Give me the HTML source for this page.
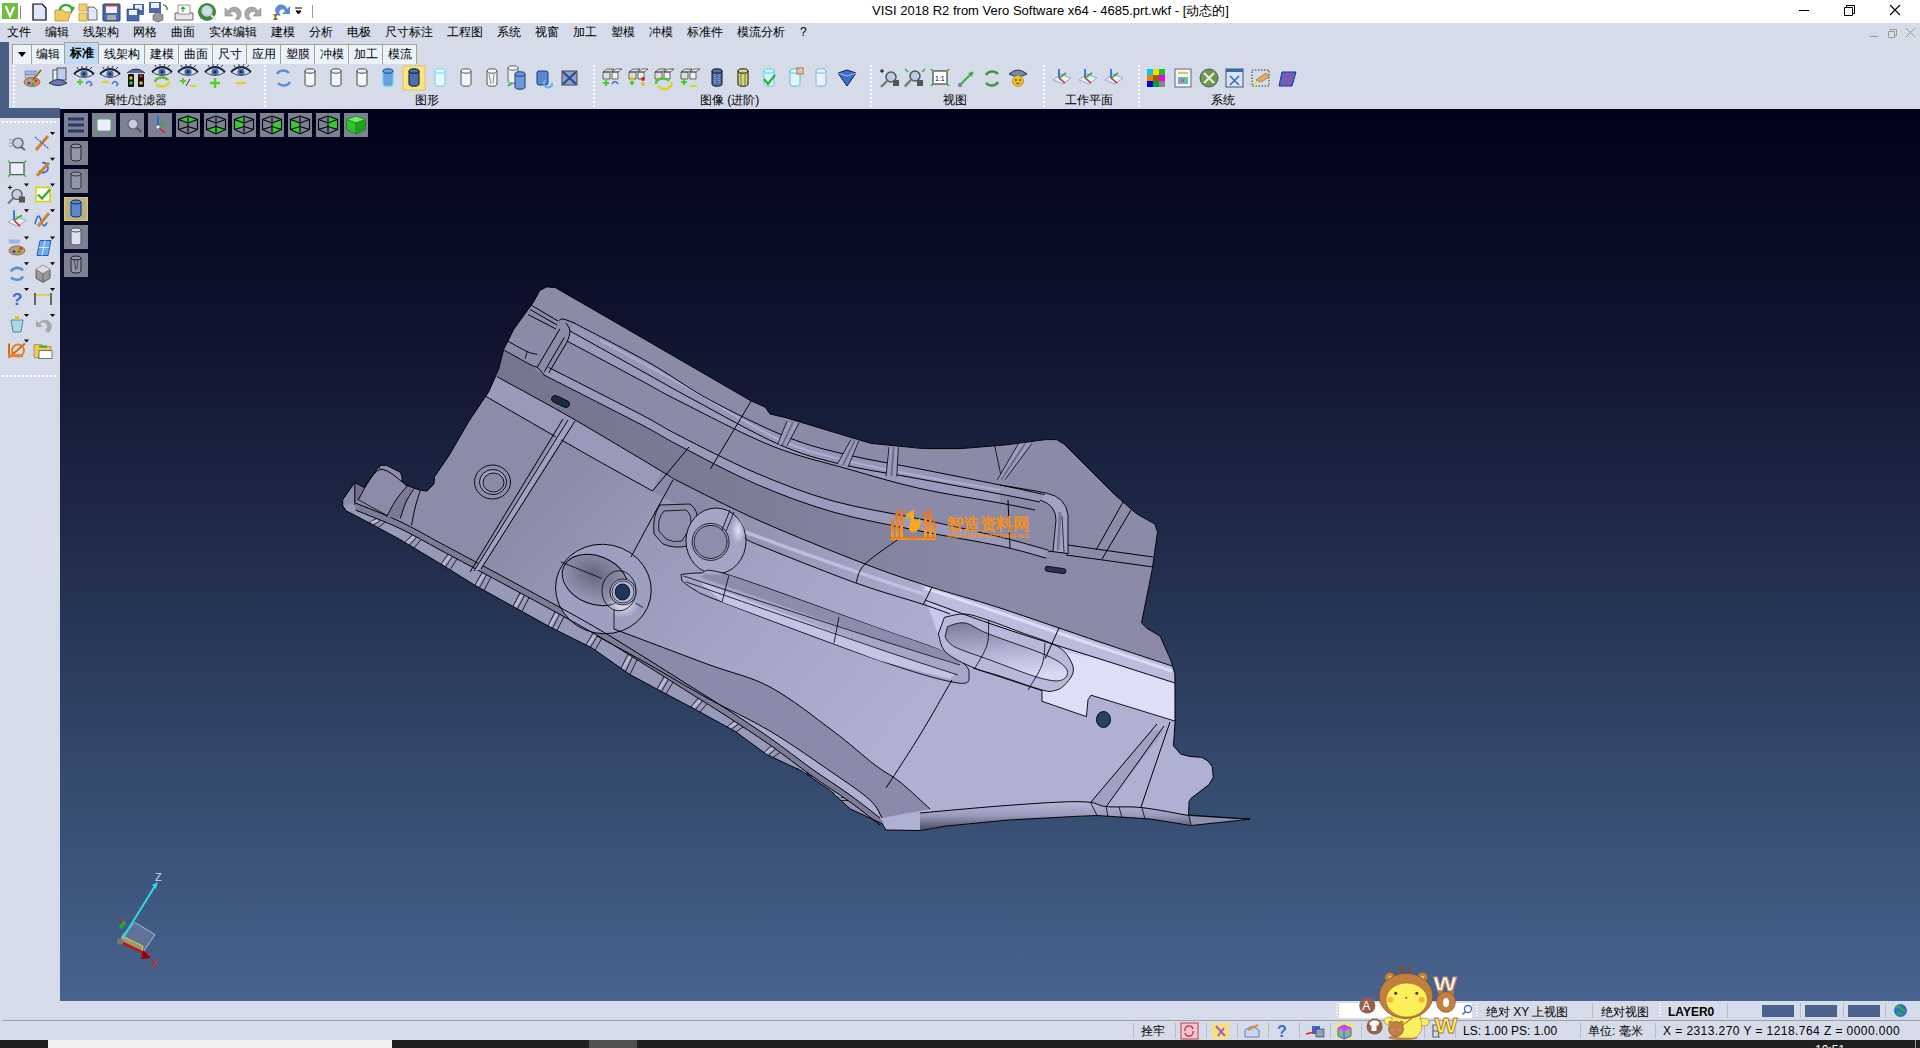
<!DOCTYPE html><html><head><meta charset="utf-8"><style>
*{margin:0;padding:0;box-sizing:border-box}
html,body{width:1920px;height:1048px;overflow:hidden;background:#d6dbe9;font-family:"Liberation Sans",sans-serif;font-size:12px;color:#000;position:relative}
.abs{position:absolute}
svg{display:block}
#title{left:0;top:0;width:1920px;height:23px;background:#fff}
#menu{left:0;top:23px;width:1920px;height:19px;background:#d6dbe9}
#menu span{position:absolute;top:3px;font-size:12px;line-height:13px;white-space:nowrap}
#tbar{left:9px;top:42px;width:1911px;height:67px;background:#d6dbe9}
#lstrip{left:0;top:42px;width:9px;height:76px;background:#4b5e84}
#lstrip2{left:0;top:108px;width:60px;height:10px;background:#4b5e84}
.tab{position:absolute;top:44px;height:20px;background:#eaf2fb;border:1px solid #a8a288;border-bottom:none;font-size:12px;line-height:18px;text-align:center;white-space:nowrap}
.tab.act{top:42px;height:22px;background:#bfdbf5;font-weight:bold;line-height:21px}
.tab svg{display:inline-block;vertical-align:top}
#view{left:60px;top:109px;width:1860px;height:892px;background:linear-gradient(#01021a 0%,#0f132d 25%,#212d4c 50%,#344a6e 75%,#48638e 100%)}
#left{left:0;top:118px;width:60px;height:883px;background:#d6dbe9}
#status{left:0;top:1001px;width:1920px;height:39px;background:#d6dbe9}
#task{left:0;top:1040px;width:1920px;height:8px;background:#1f1f1f;overflow:hidden}
.lbl{position:absolute;top:94px;font-size:12px;line-height:13px;white-space:nowrap}
#status span, body > span{font-size:12px;line-height:13px}
</style></head><body><div id="title" class="abs"><span class="abs" style="left:872px;top:4px;font-size:13px;line-height:14px;white-space:nowrap;color:#000">VISI 2018 R2 from Vero Software x64 - 4685.prt.wkf - [动态的]</span><svg class="abs" style="left:0;top:0" width="320" height="23"><rect x="2" y="3" width="16" height="16" fill="#6cbf3a"/><path d="M6 7l4 9l4-9" fill="none" stroke="#fff" stroke-width="2.2"/><circle cx="6" cy="7" r="1.3" fill="#fff"/><path d="M20.5 6v13" stroke="#888"/><path d="M33 4h9l4 4v12h-13z" fill="#dfe8fa" stroke="#000" stroke-width="1.2"/><path d="M55 10h8l2 2h6l-3 9h-13z" fill="#f0c860" stroke="#b08a30" stroke-width=".8"/><path d="M60 10a6 5 0 0 1 12 0l2-3" fill="none" stroke="#30b030" stroke-width="2.4"/><path d="M79 4h8v7h-8zM79 13h8v8h-8z" fill="#f0d070" stroke="#b8983a" stroke-width=".8"/><path d="M88 7h6l3 3v10h-9z" fill="#dfe8fa" stroke="#444" stroke-width=".8"/><rect x="103" y="4" width="17" height="17" rx="1" fill="#4a6ab0" stroke="#2a3a70"/><rect x="106" y="5" width="11" height="8" fill="#f4f4f4"/><rect x="106" y="5" width="11" height="1.5" fill="#e04030"/><rect x="107" y="15" width="9" height="5" fill="#aaa"/><rect x="133" y="4" width="11" height="11" fill="#4a6ab0"/><rect x="135" y="5" width="7" height="5" fill="#eee"/><rect x="127" y="9" width="12" height="12" fill="#4a6ab0" stroke="#2a3a70" stroke-width=".6"/><rect x="129" y="10" width="8" height="5" fill="#eee"/><rect x="149" y="2" width="12" height="11" fill="#4a6ab0"/><rect x="151" y="3" width="8" height="5" fill="#eee"/><path d="M158 12l5 3v5l-5 2l-5-2v-5z" fill="#999" stroke="#555" stroke-width=".6"/><path d="M163 5a4 4 0 0 1 4 5" fill="none" stroke="#30a030" stroke-width="1.6"/><path d="M175 13h18v7h-18z" fill="#e8e8e8" stroke="#666"/><path d="M178 5h12v9h-12z" fill="#fff" stroke="#777" stroke-width=".8"/><path d="M183 7v5M181 9l2-2l2 2" stroke="#20b020" stroke-width="1.2" fill="none"/><circle cx="207" cy="12" r="9" fill="#3a8a3a"/><circle cx="207" cy="11" r="5" fill="#c8e0f0" stroke="#ccc" stroke-width="1.5"/><path d="M211 15l5 5" stroke="#ddd" stroke-width="2.4"/><path d="M238 20a7 7 0 1 0-10-9l-3-3v8h8l-3-3a4 4 0 1 1 5 6z" fill="#a8a8a8" stroke="#888" stroke-width=".6"/><path d="M248 20a7 7 0 1 1 10-9l3-3v8h-8l3-3a4 4 0 1 0-5 6z" fill="#a8a8a8" stroke="#888" stroke-width=".6"/><path d="M279 16a6 6 0 1 1 8-7l3-3v8h-8l3-3a3 3 0 1 0-4 4z" fill="#5a8ad8"/><path d="M273 14h5l-2 3l2 3h-5l2-3z" fill="#8a6a20"/><path d="M295 8h7M296 11h5l-2.5 3z" stroke="#000" fill="#000" stroke-width="1"/><path d="M312.5 5v13" stroke="#999"/></svg><svg class="abs" style="left:1790px;top:0" width="130" height="23"><path d="M9 10.5h10" stroke="#000" stroke-width="1"/><path d="M54.5 7.5h8v8h-8z M56.5 7.5v-2h8v8h-2" fill="none" stroke="#000" stroke-width="1"/><path d="M100 5l10 10M110 5l-10 10" stroke="#000" stroke-width="1.1"/></svg></div><div id="menu" class="abs"><span style="left:7px">文件</span><span style="left:45px">编辑</span><span style="left:83px">线架构</span><span style="left:133px">网格</span><span style="left:171px">曲面</span><span style="left:209px">实体编辑</span><span style="left:271px">建模</span><span style="left:309px">分析</span><span style="left:347px">电极</span><span style="left:385px">尺寸标注</span><span style="left:447px">工程图</span><span style="left:497px">系统</span><span style="left:535px">视窗</span><span style="left:573px">加工</span><span style="left:611px">塑模</span><span style="left:649px">冲模</span><span style="left:687px">标准件</span><span style="left:737px">模流分析</span><span style="left:800px">?</span><svg class="abs" style="left:1866px;top:0" width="54" height="19" viewBox="0 0 54 19"><path d="M4 13.5h8" stroke="#a09a88" stroke-width="1"/><path d="M22.5 8.5h6v6h-6z M24.5 8.5v-2h6v6h-2" fill="none" stroke="#a09a88"/><path d="M40 5l9 9M49 5l-9 9" stroke="#a09a88"/></svg></div><div id="tbar" class="abs"></div><div id="lstrip" class="abs"></div><div id="lstrip2" class="abs"></div><div class="tab" style="left:12px;width:20px"><svg width="12" height="18" style="margin-top:0"><path d="M2 7h8l-4 5z" fill="#000"/></svg></div><div class="tab" style="left:31px;width:34px">编辑</div><div class="tab act" style="left:64px;width:35px">标准</div><div class="tab" style="left:98px;width:47px">线架构</div><div class="tab" style="left:144px;width:35px">建模</div><div class="tab" style="left:178px;width:35px">曲面</div><div class="tab" style="left:212px;width:35px">尺寸</div><div class="tab" style="left:246px;width:35px">应用</div><div class="tab" style="left:280px;width:35px">塑膜</div><div class="tab" style="left:314px;width:35px">冲模</div><div class="tab" style="left:348px;width:35px">加工</div><div class="tab" style="left:382px;width:35px">模流</div><div class="abs" style="left:13px;top:65px;width:2px;height:42px;background-image:linear-gradient(#fff 50%,transparent 50%);background-size:2px 4px;opacity:.9"></div><div class="abs" style="left:264px;top:65px;width:2px;height:42px;background-image:linear-gradient(#fff 50%,transparent 50%);background-size:2px 4px;opacity:.9"></div><div class="abs" style="left:593px;top:65px;width:2px;height:42px;background-image:linear-gradient(#fff 50%,transparent 50%);background-size:2px 4px;opacity:.9"></div><div class="abs" style="left:870px;top:65px;width:2px;height:42px;background-image:linear-gradient(#fff 50%,transparent 50%);background-size:2px 4px;opacity:.9"></div><div class="abs" style="left:1043px;top:65px;width:2px;height:42px;background-image:linear-gradient(#fff 50%,transparent 50%);background-size:2px 4px;opacity:.9"></div><div class="abs" style="left:1138px;top:65px;width:2px;height:42px;background-image:linear-gradient(#fff 50%,transparent 50%);background-size:2px 4px;opacity:.9"></div><span class="lbl" style="left:104px">属性/过滤器</span><span class="lbl" style="left:415px">图形</span><span class="lbl" style="left:700px">图像 (进阶)</span><span class="lbl" style="left:943px">视图</span><span class="lbl" style="left:1065px">工作平面</span><span class="lbl" style="left:1211px">系统</span><svg class="abs" style="left:0;top:0" width="1320" height="110"><g><path d="M25 71h12l-2 4h-10z" fill="#9db4e8" stroke="#6a7aa8" stroke-width=".6"/><path d="M25 75h10v3h-10z" fill="#ccc" stroke="#888" stroke-width=".6"/><ellipse cx="32" cy="82" rx="8" ry="4.5" fill="#c89a6a" stroke="#7a5a3a" stroke-width=".8"/><circle cx="29" cy="83" r="1.6" fill="#2a4af0"/><circle cx="33" cy="84" r="1.6" fill="#2ab02a"/><circle cx="36" cy="81" r="1.6" fill="#e03030"/><path d="M33 80l8-10" stroke="#8a5a2a" stroke-width="1.5"/><rect x="53" y="70" width="10" height="12" fill="#e8eefa" stroke="#333" stroke-width=".8"/><rect x="57" y="68" width="9" height="12" fill="#b8ccf0" stroke="#333" stroke-width=".8"/><path d="M49 83q9-7 18 0q-9 5-18 0z" fill="#6a7ab0" stroke="#2c3550"/><path d="M74 74q10 -9 20 0q-10 7 -20 0z" fill="#d8dcea" stroke="#3a4668" stroke-width="1"/><circle cx="84" cy="74" r="3.6" fill="#4a70a8"/><circle cx="84" cy="74" r="1.4" fill="#1a2a48"/><path d="M74 74q10 -10 20 0" fill="none" stroke="#1c2440" stroke-width="2"/><path d="M78 69l-1 -2M82 68l0 -2M86 68l1 -2M90 69l2 -2" stroke="#1c2440" stroke-width=".9"/><path d="M77 82h6M80 79v6" stroke="#58d020" stroke-width="2"/><path d="M86 84q3-5 6 0l-2 2" fill="none" stroke="#3a70d0" stroke-width="1.4"/><path d="M100 74q10 -9 20 0q-10 7 -20 0z" fill="#d8dcea" stroke="#3a4668" stroke-width="1"/><circle cx="110" cy="74" r="3.6" fill="#4a70a8"/><circle cx="110" cy="74" r="1.4" fill="#1a2a48"/><path d="M100 74q10 -10 20 0" fill="none" stroke="#1c2440" stroke-width="2"/><path d="M104 69l-1 -2M108 68l0 -2M112 68l1 -2M116 69l2 -2" stroke="#1c2440" stroke-width=".9"/><path d="M102 82h7" stroke="#e0d020" stroke-width="2.2"/><path d="M112 84q3-5 6 0l-2 2" fill="none" stroke="#3a70d0" stroke-width="1.4"/><path d="M127 73q9-8 18 0" fill="#5a6a9a" stroke="#2c3550"/><rect x="128" y="74" width="6" height="13" rx="1" fill="#111"/><rect x="138" y="74" width="6" height="13" rx="1" fill="#111"/><circle cx="131" cy="83" r="1.8" fill="#30d030"/><circle cx="131" cy="78" r="1.8" fill="#e0c020"/><circle cx="141" cy="76" r="1.8" fill="#e02020"/><circle cx="141" cy="83" r="1.8" fill="#e0c020"/><path d="M152 72q10 -9 20 0q-10 7 -20 0z" fill="#d8dcea" stroke="#3a4668" stroke-width="1"/><circle cx="162" cy="72" r="3.6" fill="#4a70a8"/><circle cx="162" cy="72" r="1.4" fill="#1a2a48"/><path d="M152 72q10 -10 20 0" fill="none" stroke="#1c2440" stroke-width="2"/><path d="M156 67l-1 -2M160 66l0 -2M164 66l1 -2M168 67l2 -2" stroke="#1c2440" stroke-width=".9"/><path d="M155 82a7 5 0 0 1 13-2" fill="none" stroke="#60c030" stroke-width="2.4"/><path d="M169 81a7 5 0 0 1-13 3" fill="none" stroke="#e0d020" stroke-width="2.4"/><path d="M178 72q10 -9 20 0q-10 7 -20 0z" fill="#d8dcea" stroke="#3a4668" stroke-width="1"/><circle cx="188" cy="72" r="3.6" fill="#4a70a8"/><circle cx="188" cy="72" r="1.4" fill="#1a2a48"/><path d="M178 72q10 -10 20 0" fill="none" stroke="#1c2440" stroke-width="2"/><path d="M182 67l-1 -2M186 66l0 -2M190 66l1 -2M194 67l2 -2" stroke="#1c2440" stroke-width=".9"/><path d="M180 81h6M183 78v6" stroke="#58d020" stroke-width="2"/><path d="M186 86l4-7" stroke="#333"/><path d="M190 86h6" stroke="#e0d020" stroke-width="2"/><path d="M205 72q10 -9 20 0q-10 7 -20 0z" fill="#d8dcea" stroke="#3a4668" stroke-width="1"/><circle cx="215" cy="72" r="3.6" fill="#4a70a8"/><circle cx="215" cy="72" r="1.4" fill="#1a2a48"/><path d="M205 72q10 -10 20 0" fill="none" stroke="#1c2440" stroke-width="2"/><path d="M209 67l-1 -2M213 66l0 -2M217 66l1 -2M221 67l2 -2" stroke="#1c2440" stroke-width=".9"/><path d="M210 83h10M215 78v10" stroke="#58d020" stroke-width="2.4"/><path d="M231 72q10 -9 20 0q-10 7 -20 0z" fill="#d8dcea" stroke="#3a4668" stroke-width="1"/><circle cx="241" cy="72" r="3.6" fill="#4a70a8"/><circle cx="241" cy="72" r="1.4" fill="#1a2a48"/><path d="M231 72q10 -10 20 0" fill="none" stroke="#1c2440" stroke-width="2"/><path d="M235 67l-1 -2M239 66l0 -2M243 66l1 -2M247 67l2 -2" stroke="#1c2440" stroke-width=".9"/><path d="M236 83h10" stroke="#e0d020" stroke-width="2.4"/></g><path d="M277 74a7 6 0 0 1 12-1M290 82a7 6 0 0 1-12 1" fill="none" stroke="#5a90d8" stroke-width="2.6"/><path d="M305 71v13a5 2.2 0 0 0 10 0v-13" fill="#f4f6fa" stroke="#444" stroke-width="1"/><ellipse cx="310" cy="71" rx="5" ry="2.2" fill="#f4f6fa" stroke="#444" stroke-width="1"/><path d="M331 71v13a5 2.2 0 0 0 10 0v-13" fill="#f4f6fa" stroke="#444" stroke-width="1"/><ellipse cx="336" cy="71" rx="5" ry="2.2" fill="#f4f6fa" stroke="#444" stroke-width="1"/><path d="M357 71v13a5 2.2 0 0 0 10 0v-13" fill="#f4f6fa" stroke="#444" stroke-width="1"/><ellipse cx="362" cy="71" rx="5" ry="2.2" fill="#f4f6fa" stroke="#444" stroke-width="1"/><path d="M383 71v13a5 2.2 0 0 0 10 0v-13" fill="#6aa0e0" stroke="#40e0f0" stroke-width="1"/><ellipse cx="388" cy="71" rx="5" ry="2.2" fill="#6aa0e0" stroke="#1a4a90" stroke-width="1"/><rect x="403" y="66" width="22" height="24" fill="#fbe38a" stroke="#e8c34a"/><path d="M409 71v13a5 2.2 0 0 0 10 0v-13" fill="#4a70b0" stroke="#111" stroke-width="1"/><ellipse cx="414" cy="71" rx="5" ry="2.2" fill="#4a70b0" stroke="#111" stroke-width="1"/><path d="M435 71v13a5 2.2 0 0 0 10 0v-13" fill="#e8f8ff" stroke="#60d8f0" stroke-width="1"/><ellipse cx="440" cy="71" rx="5" ry="2.2" fill="#e8f8ff" stroke="#60d8f0" stroke-width="1"/><path d="M461 71v13a5 2.2 0 0 0 10 0v-13" fill="#f4f6fa" stroke="#555" stroke-width="1"/><ellipse cx="466" cy="71" rx="5" ry="2.2" fill="#f4f6fa" stroke="#555" stroke-width="1"/><path d="M487 71v13a5 2.2 0 0 0 10 0v-13" fill="#f4f6fa" stroke="#555" stroke-width="1"/><ellipse cx="492" cy="71" rx="5" ry="2.2" fill="#f4f6fa" stroke="#555" stroke-width="1"/><path d="M489 74l2 10M494 74l-1 9" stroke="#555" stroke-width=".7"/><path d="M508 68v13a5 2.2 0 0 0 10 0v-13" fill="#eee" stroke="#666" stroke-width="1"/><ellipse cx="513" cy="68" rx="5" ry="2.2" fill="#eee" stroke="#666" stroke-width="1"/><path d="M515 74v13a5 2.2 0 0 0 10 0v-13" fill="#6a9ad8" stroke="#1a3a80" stroke-width="1"/><ellipse cx="520" cy="74" rx="5" ry="2.2" fill="#6a9ad8" stroke="#1a3a80" stroke-width="1"/><path d="M508 86l4-3" stroke="#30c030" stroke-width="2"/><rect x="537" y="71" width="11" height="14" rx="2" fill="#5a88d0" stroke="#1a3a80"/><path d="M546 80a4 4 0 1 0 6 3" fill="none" stroke="#6ab0f0" stroke-width="2"/><rect x="562" y="71" width="15" height="14" fill="#8ca0c8" stroke="#445"/><path d="M563 72l13 12M576 72l-13 12" stroke="#2a4a90" stroke-width="2"/><path d="M603 72l4-3h7l-4 3z M603 72h7v7h-7z" fill="#ddd" stroke="#333" stroke-width=".7"/><path d="M612 72l4-3h6l-4 3z M612 72h6v7h-6z" fill="#eee" stroke="#333" stroke-width=".7"/><path d="M603 83h6M606 80v6" stroke="#40d020" stroke-width="2"/><path d="M612 84q3-5 6 0" fill="none" stroke="#3a70d0" stroke-width="1.5"/><path d="M629 72l4-3h7l-4 3z M629 72h7v7h-7z" fill="#ddd" stroke="#333" stroke-width=".7"/><path d="M638 72l4-3h6l-4 3z M638 72h6v7h-6z" fill="#eee" stroke="#333" stroke-width=".7"/><circle cx="632" cy="83" r="2" fill="#30d030"/><circle cx="632" cy="79" r="2" fill="#e0c020"/><circle cx="643" cy="79" r="2" fill="#e02020"/><circle cx="643" cy="84" r="2" fill="#e0c020"/><path d="M655 72l4-3h7l-4 3z M655 72h7v7h-7z" fill="#ddd" stroke="#333" stroke-width=".7"/><path d="M664 72l4-3h6l-4 3z M664 72h6v7h-6z" fill="#eee" stroke="#333" stroke-width=".7"/><path d="M656 84a7 5 0 0 1 13-3" fill="none" stroke="#60c030" stroke-width="2.4"/><path d="M671 82a7 5 0 0 1-13 4" fill="none" stroke="#e0d020" stroke-width="2.4"/><path d="M681 72l4-3h7l-4 3z M681 72h7v7h-7z" fill="#ddd" stroke="#333" stroke-width=".7"/><path d="M690 72l4-3h6l-4 3z M690 72h6v7h-6z" fill="#eee" stroke="#333" stroke-width=".7"/><path d="M681 82h6M684 79v6" stroke="#40d020" stroke-width="2"/><path d="M690 86h7" stroke="#e0d020" stroke-width="2"/><path d="M712 71v13a5 2.2 0 0 0 10 0v-13" fill="#4a70b0" stroke="#111" stroke-width="1"/><ellipse cx="717" cy="71" rx="5" ry="2.2" fill="#4a70b0" stroke="#111" stroke-width="1"/><path d="M715 74v10M719 74v10" stroke="#fff" stroke-width=".6" stroke-dasharray="1 1"/><path d="M738 71v13a5 2.2 0 0 0 10 0v-13" fill="#d8d878" stroke="#111" stroke-width="1"/><ellipse cx="743" cy="71" rx="5" ry="2.2" fill="#d8d878" stroke="#111" stroke-width="1"/><path d="M741 73v12M745 73v12" stroke="#555" stroke-width=".8"/><path d="M764 71v13a5 2.2 0 0 0 10 0v-13" fill="#d8f4fa" stroke="#50d0e8" stroke-width="1"/><ellipse cx="769" cy="71" rx="5" ry="2.2" fill="#d8f4fa" stroke="#50d0e8" stroke-width="1"/><path d="M764 79l4 5l7-9" fill="none" stroke="#30b030" stroke-width="2.2"/><path d="M790 71v13a5 2.2 0 0 0 10 0v-13" fill="#e4f6fc" stroke="#50c0e0" stroke-width="1"/><ellipse cx="795" cy="71" rx="5" ry="2.2" fill="#e4f6fc" stroke="#50c0e0" stroke-width="1"/><rect x="797" y="68" width="6" height="6" fill="none" stroke="#e08030" stroke-width="1.4"/><path d="M816 71v13a5 2.2 0 0 0 10 0v-13" fill="#e8f2ff" stroke="#80b0e8" stroke-width="1"/><ellipse cx="821" cy="71" rx="5" ry="2.2" fill="#e8f2ff" stroke="#80b0e8" stroke-width="1"/><path d="M838 73l9-3l9 3l-9 13z" fill="#3a70d0" stroke="#102050"/><path d="M838 73l9 3l9-3" fill="none" stroke="#9ac0f0"/><circle cx="891" cy="77" r="5" fill="#b8cce8" stroke="#555" stroke-width="1.5"/><path d="M887 81l-6 6" stroke="#777" stroke-width="2.4"/><rect x="893" y="80" width="6" height="6" fill="#555"/><path d="M880 71h4M882 69v4" stroke="#000"/><circle cx="915" cy="76" r="5" fill="#b8cce8" stroke="#555" stroke-width="1.5"/><path d="M911 80l-6 6" stroke="#777" stroke-width="2.4"/><rect x="917" y="80" width="6" height="6" fill="#555"/><path d="M905 69l3 3M925 69l-3 3M905 87l3-3" stroke="#30c030" stroke-width="1.6"/><rect x="933" y="71" width="14" height="13" fill="#fff" stroke="#222"/><text x="935" y="81" font-size="7" font-family="Liberation Sans">1:1</text><path d="M931 69l3 3M949 69l-3 3M931 86l3-3M949 86l-3-3" stroke="#30c030" stroke-width="1.6"/><path d="M960 85l13-13" stroke="#3ab03a" stroke-width="2"/><path d="M973 72l-5 1l4 4z" fill="#3ab03a"/><circle cx="960" cy="85" r="2.2" fill="#888"/><path d="M986 75a7 6 0 0 1 12-1M998 82a7 6 0 0 1-12 1" fill="none" stroke="#30a030" stroke-width="2.6"/><path d="M1009 74q9-8 18 0q-9 5-18 0z" fill="#7a86a8" stroke="#2c3550"/><circle cx="1018" cy="81" r="5.5" fill="#f0c020" stroke="#b08010" stroke-width=".7"/><circle cx="1016" cy="80" r=".8"/><circle cx="1020" cy="80" r=".8"/><path d="M1016 83q2 1.5 4 0" fill="none" stroke="#333" stroke-width=".7"/><path d="M1053 80l8-6l10 4l-8 6z" fill="#e8eef8" stroke="#8898b8" stroke-width=".8"/><path d="M1059 78v-9" stroke="#2060e0" stroke-width="1.6"/><path d="M1059 78l7-5" stroke="#30b030" stroke-width="1.6"/><path d="M1059 78l6 5" stroke="#e02020" stroke-width="1.6"/><path d="M1079 80l8-6l10 4l-8 6z" fill="#e8eef8" stroke="#8898b8" stroke-width=".8"/><path d="M1085 78v-9" stroke="#2060e0" stroke-width="1.6"/><path d="M1085 78l7-5" stroke="#30b030" stroke-width="1.6"/><path d="M1085 78l6 5" stroke="#e02020" stroke-width="1.6"/><path d="M1105 80l8-6l10 4l-8 6z" fill="#e8eef8" stroke="#8898b8" stroke-width=".8"/><path d="M1111 78v-9" stroke="#2060e0" stroke-width="1.6"/><path d="M1111 78l7-5" stroke="#30b030" stroke-width="1.6"/><path d="M1111 78l6 5" stroke="#e02020" stroke-width="1.6"/><rect x="1147" y="69" width="6" height="6" fill="#00c8f0"/><rect x="1153" y="69" width="6" height="6" fill="#f0e000"/><rect x="1159" y="69" width="6" height="6" fill="#20c020"/><rect x="1147" y="75" width="6" height="6" fill="#f08000"/><rect x="1153" y="75" width="6" height="6" fill="#a06000"/><rect x="1159" y="75" width="6" height="6" fill="#f000f0"/><rect x="1147" y="81" width="6" height="6" fill="#0000e0"/><rect x="1153" y="81" width="6" height="6" fill="#00a040"/><rect x="1159" y="81" width="6" height="6" fill="#888"/><rect x="1175" y="69" width="16" height="18" fill="#f0f4ff" stroke="#667"/><rect x="1178" y="72" width="10" height="2" fill="#f0c040"/><rect x="1178" y="77" width="10" height="7" fill="#60c0a0"/><rect x="1181" y="79" width="3" height="3" fill="#e040e0"/><circle cx="1209" cy="78" r="9" fill="#6a9a4a" stroke="#345" stroke-width=".8"/><path d="M1204 73l10 10M1214 73l-10 10" stroke="#e8e8e8" stroke-width="2.2"/><rect x="1226" y="69" width="17" height="18" fill="#d8e4f8" stroke="#456"/><rect x="1226" y="69" width="17" height="3" fill="#3a68b0"/><path d="M1230 76l9 9M1239 76l-9 9" stroke="#3a6ab0" stroke-width="1.6"/><rect x="1252" y="70" width="17" height="16" fill="none" stroke="#334" stroke-dasharray="1.5 1.5"/><path d="M1256 80l10-7l3 4l-8 5z" fill="#e0b060" stroke="#8a5a20" stroke-width=".6"/><circle cx="1255" cy="84" r="2" fill="#f0e040"/><path d="M1282 72h14l-4 14h-13z" fill="#4a6ad8" stroke="#20308a"/><path d="M1284 75h10M1283 79h10M1281 83h10M1287 72l-3 14M1291 72l-3 14" stroke="#e04060" stroke-width=".7"/></svg><div id="view" class="abs"></div><div id="left" class="abs"><div class="abs" style="left:2px;top:3px;width:56px;height:2px;background-image:linear-gradient(90deg,#fff 50%,transparent 50%);background-size:4px 2px"></div><div class="abs" style="left:2px;top:257px;width:56px;height:2px;background-image:linear-gradient(90deg,#fff 50%,transparent 50%);background-size:4px 2px"></div></div><svg class="abs" style="left:0;top:0" width="60" height="400"><circle cx="18" cy="143" r="5" fill="#c0d0e8" stroke="#555" stroke-width="1.2"/><path d="M9 140h6M9 143h5M9 146h6" stroke="#999"/><path d="M21 147l4 3" stroke="#666" stroke-width="2"/><path d="M36 150l12-14" stroke="#d08030" stroke-width="3"/><path d="M35 137l14 12" stroke="#3a6ad0" stroke-width="1.4" stroke-dasharray="2 1"/><path d="M50 132h5l-2.5 3z" fill="#000"/><rect x="10" y="162.7" width="14" height="12" fill="#e8f0fa" stroke="#333"/><path d="M8 160.7l3 3M26 160.7l-3 3M8 176.7l3-3M26 176.7l-3-3" stroke="#30c030" stroke-width="1.6"/><path d="M39 170.7a5 5 0 1 0 3-8" fill="none" stroke="#3a6ad0" stroke-width="1.6"/><path d="M37 175.7l12-13" stroke="#d08030" stroke-width="3"/><path d="M50 157.7h5l-2.5 3z" fill="#000"/><circle cx="17" cy="194.5" r="5" fill="#c0d0e8" stroke="#555" stroke-width="1.2"/><path d="M13 198.5l-5 5" stroke="#777" stroke-width="2.2"/><rect x="19" y="196.5" width="6" height="6" fill="#555"/><path d="M8 187.5h4M10 185.5v4" stroke="#000"/><path d="M24 183.5h5l-2.5 3z" fill="#000"/><rect x="36" y="187.5" width="14" height="14" fill="#fff" stroke="#e0d000" stroke-width="1.6"/><path d="M38 194.5l4 4l8-9" fill="none" stroke="#30b030" stroke-width="2.4"/><path d="M50 183.5h5l-2.5 3z" fill="#000"/><path d="M8 222.3l8-6l10 4l-8 6z" fill="#e8eef8" stroke="#8898b8" stroke-width=".8"/><path d="M14 220.3v-10" stroke="#2060e0" stroke-width="1.6"/><path d="M14 220.3l8-5" stroke="#30b030" stroke-width="1.6"/><path d="M14 220.3l6 6" stroke="#e02020" stroke-width="1.6"/><path d="M24 209.3h5l-2.5 3z" fill="#000"/><path d="M35 224.3q3-14 6-4t6 2" fill="none" stroke="#3a6ad0" stroke-width="1.6"/><path d="M38 226.3l11-13" stroke="#d08030" stroke-width="3"/><path d="M50 209.3h5l-2.5 3z" fill="#000"/><path d="M9 239.5h12l-2 4h-10z" fill="#9db4e8"/><ellipse cx="17" cy="250.5" rx="8" ry="4.5" fill="#c89a6a" stroke="#7a5a3a" stroke-width=".8"/><circle cx="14" cy="251.5" r="1.6" fill="#2a4af0"/><circle cx="19" cy="251.5" r="1.6" fill="#2ab02a"/><circle cx="21" cy="248.5" r="1.6" fill="#e03030"/><path d="M24 236.5h5l-2.5 3z" fill="#000"/><path d="M37 255.5l3-15h11l-3 15z" fill="#6aa8f0" stroke="#2a5ab0"/><path d="M39 247.5h10M45 240.5l-3 15" stroke="#d8ecff" stroke-width="1"/><path d="M50 236.5h5l-2.5 3z" fill="#000"/><path d="M11 271.3a7 6 0 0 1 12-1M23 276.3a7 6 0 0 1-12 1" fill="none" stroke="#5a90d8" stroke-width="2.6"/><path d="M24 262.3h5l-2.5 3z" fill="#000"/><path d="M36 269.3l7-4l7 4v9l-7 4l-7-4z" fill="#999" stroke="#444" stroke-width=".8"/><path d="M36 269.3l7 4l7-4M43 273.3v9" fill="none" stroke="#555" stroke-width=".8"/><path d="M36 269.3l7-4l7 4l-7 4z" fill="#ddd"/><path d="M50 262.3h5l-2.5 3z" fill="#000"/><text x="12" y="305" font-size="17" font-weight="bold" fill="#3a6ad0" font-family="Liberation Sans">?</text><path d="M24 288h5l-2.5 3z" fill="#000"/><path d="M35 293v12M51 293v12" stroke="#333" stroke-width="1.4"/><path d="M36 295h14" stroke="#e0d000" stroke-width="1.4"/><path d="M50 288h5l-2.5 3z" fill="#000"/><path d="M11 320h12l-2 12h-8z" fill="#a8d8e8" stroke="#4a8aa8"/><rect x="15" y="316" width="4" height="4" fill="#e0c020"/><path d="M24 314h5l-2.5 3z" fill="#000"/><path d="M48 333a7 7 0 1 0-9-10l-3-3v7h7l-3-3a4 4 0 1 1 5 6z" fill="#a8a8a8"/><path d="M50 314h5l-2.5 3z" fill="#000"/><circle cx="18" cy="350.6" r="6" fill="none" stroke="#e08020" stroke-width="2"/><path d="M9 357.6l16-14M9 343.6v14" stroke="#d07010" stroke-width="2"/><path d="M8 355.6h15" stroke="#f08030" stroke-width="3"/><path d="M24 339.6h5l-2.5 3z" fill="#000"/><path d="M34 344.6h8l2 2h7v11h-17z" fill="#f0c860" stroke="#a88a30" stroke-width=".8"/><rect x="39" y="350.6" width="13" height="8" fill="#fff" stroke="#555" stroke-width=".8"/><path d="M39 346.6h8" stroke="#30b030" stroke-width="2"/></svg><svg class="abs" style="left:0;top:0" width="1920" height="1048"><defs><linearGradient id="pg" gradientUnits="userSpaceOnUse" x1="560" y1="470" x2="880" y2="760"><stop offset="0" stop-color="#8c8ca9"/><stop offset="0.5" stop-color="#a2a2c4"/><stop offset="1" stop-color="#b0b0d2"/></linearGradient><linearGradient id="ridge" gradientUnits="userSpaceOnUse" x1="0" y1="0" x2="0.35" y2="1"><stop offset="0" stop-color="#9999bb"/><stop offset="1" stop-color="#c8c8ea"/></linearGradient><linearGradient id="flg" gradientUnits="userSpaceOnUse" x1="700" y1="690" x2="690" y2="720"><stop offset="0" stop-color="#9a9abc"/><stop offset="1" stop-color="#7a7a98"/></linearGradient><radialGradient id="pock" cx="0.45" cy="0.4" r="0.6"><stop offset="0" stop-color="#66667e"/><stop offset="1" stop-color="#9a9ab8"/></radialGradient><clipPath id="pc"><polygon points="540.0,290.3 546.9,286.9 555.5,287.7 591.5,308.5 643.0,338.3 694.6,368.2 750.8,400.8 765.0,407.0 770.1,414.0 777.0,415.7 786.0,417.7 825.3,429.7 870.6,443.3 923.5,448.6 961.2,448.6 1006.5,444.8 1045.8,439.6 1056.4,439.6 1064.0,444.0 1088.0,468.0 1114.8,494.8 1136.2,513.5 1154.9,524.1 1157.5,532.1 1152.2,569.5 1141.5,623.0 1146.9,628.3 1160.2,636.3 1170.9,660.3 1174.9,673.7 1175.0,722.5 1174.1,736.7 1173.4,745.7 1180.7,754.1 1190.0,756.5 1201.7,757.3 1208.0,761.0 1212.2,766.7 1213.3,777.2 1209.0,784.6 1200.0,791.5 1191.2,798.2 1189.1,801.4 1188.6,815.0 1250.0,819.2 1191.2,825.5 1150.2,819.0 1097.0,815.5 1075.8,816.4 1008.5,820.0 946.6,826.0 920.0,830.5 886.0,830.0 882.0,823.6 850.4,809.0 829.5,790.0 802.2,771.2 766.5,754.4 735.0,731.3 693.0,708.2 657.3,689.3 630.0,674.6 592.0,648.0 550.0,627.0 512.2,606.0 474.4,585.0 440.8,564.0 399.4,539.2 369.4,522.9 346.2,510.8 342.7,505.7 342.7,499.7 354.8,482.5 364.2,487.6 379.7,465.3 386.5,465.3 400.3,472.2 402.0,476.5 402.0,480.8 408.0,485.9 420.0,490.2 426.9,491.1 433.8,484.2 434.7,476.5 449.3,455.0 469.0,421.0 488.8,391.6 498.7,369.0 503.7,349.4 513.6,329.6 533.5,302.0"/></clipPath></defs><polygon points="540.0,290.3 546.9,286.9 555.5,287.7 591.5,308.5 643.0,338.3 694.6,368.2 750.8,400.8 765.0,407.0 770.1,414.0 777.0,415.7 786.0,417.7 825.3,429.7 870.6,443.3 923.5,448.6 961.2,448.6 1006.5,444.8 1045.8,439.6 1056.4,439.6 1064.0,444.0 1088.0,468.0 1114.8,494.8 1136.2,513.5 1154.9,524.1 1157.5,532.1 1152.2,569.5 1141.5,623.0 1146.9,628.3 1160.2,636.3 1170.9,660.3 1174.9,673.7 1175.0,722.5 1174.1,736.7 1173.4,745.7 1180.7,754.1 1190.0,756.5 1201.7,757.3 1208.0,761.0 1212.2,766.7 1213.3,777.2 1209.0,784.6 1200.0,791.5 1191.2,798.2 1189.1,801.4 1188.6,815.0 1250.0,819.2 1191.2,825.5 1150.2,819.0 1097.0,815.5 1075.8,816.4 1008.5,820.0 946.6,826.0 920.0,830.5 886.0,830.0 882.0,823.6 850.4,809.0 829.5,790.0 802.2,771.2 766.5,754.4 735.0,731.3 693.0,708.2 657.3,689.3 630.0,674.6 592.0,648.0 550.0,627.0 512.2,606.0 474.4,585.0 440.8,564.0 399.4,539.2 369.4,522.9 346.2,510.8 342.7,505.7 342.7,499.7 354.8,482.5 364.2,487.6 379.7,465.3 386.5,465.3 400.3,472.2 402.0,476.5 402.0,480.8 408.0,485.9 420.0,490.2 426.9,491.1 433.8,484.2 434.7,476.5 449.3,455.0 469.0,421.0 488.8,391.6 498.7,369.0 503.7,349.4 513.6,329.6 533.5,302.0" fill="url(#pg)" /><g clip-path="url(#pc)"><path d="M520,270 L1070,430 L1180,520 L1180,670 L1172,666 L1172.0,666.0 C1160.0,662.0 1128.7,651.7 1100.0,642.0 C1071.3,632.3 1028.2,617.2 1000.0,608.0 C971.8,598.8 953.5,594.3 931.0,587.0 C908.5,579.7 893.5,575.0 865.0,564.0 C836.5,553.0 790.8,534.7 760.0,521.0 C729.2,507.3 696.4,490.3 680.0,482.0 C663.6,473.7 679.8,482.0 661.7,471.3 C643.6,460.6 599.1,433.7 571.6,417.9 C544.1,402.1 509.3,383.5 496.8,376.6 L470,360 Z" fill="#8b8ba8"/><defs><linearGradient id="chg" gradientUnits="userSpaceOnUse" x1="520" y1="0" x2="1000" y2="0"><stop offset="0" stop-color="#75758e"/><stop offset="0.45" stop-color="#7c7c97"/><stop offset="1" stop-color="#8a8aa8"/></linearGradient></defs><path d="M504.3,350.2 C508.6,352.6 524.5,361.6 530.0,364.5 C535.5,367.4 534.9,365.6 537.2,367.3 C539.5,369.1 526.9,365.6 544.0,375.0 C561.1,384.4 617.3,412.2 640.0,424.0 C662.7,435.8 660.7,436.0 680.0,446.0 C699.3,456.0 730.5,473.0 756.0,484.0 C781.5,495.0 805.7,504.2 833.0,512.0 C860.3,519.8 892.2,525.3 920.0,531.0 C947.8,536.7 979.0,541.5 1000.0,546.0 C1021.0,550.5 1038.3,556.0 1046.0,558.0 L1000.0,608.0 C988.5,604.5 953.5,594.3 931.0,587.0 C908.5,579.7 893.5,575.0 865.0,564.0 C836.5,553.0 790.8,534.7 760.0,521.0 C729.2,507.3 696.4,490.3 680.0,482.0 C663.6,473.7 679.8,482.0 661.7,471.3 C643.6,460.6 599.1,433.7 571.6,417.9 C544.1,402.1 509.3,383.5 496.8,376.6 Z" fill="url(#chg)" /><path d="M548.7,367.5 C563.9,375.2 618.1,402.6 640.0,414.0 C661.9,425.4 660.7,426.2 680.0,436.0 C699.3,445.8 730.5,462.2 756.0,473.0 C781.5,483.8 805.7,493.3 833.0,501.0 C860.3,508.7 892.2,513.0 920.0,519.0 C947.8,525.0 978.7,531.8 1000.0,537.0 C1021.3,542.2 1040.0,547.8 1048.0,550.0 L1046.0,558.0 C1038.3,556.0 1021.0,550.5 1000.0,546.0 C979.0,541.5 947.8,536.7 920.0,531.0 C892.2,525.3 860.3,519.8 833.0,512.0 C805.7,504.2 781.5,495.0 756.0,484.0 C730.5,473.0 699.3,456.0 680.0,446.0 C660.7,436.0 662.7,435.8 640.0,424.0 C617.3,412.2 560.0,383.2 544.0,375.0 Z" fill="#9a9abc" /><path d="M496.8,376.6 C509.3,383.5 544.1,402.1 571.6,417.9 C599.1,433.7 646.7,462.4 661.7,471.3 L652.5,491.0 C641.6,484.9 614.6,470.2 586.9,454.5 C559.1,438.8 502.8,406.2 486.0,396.5 Z" fill="#9999b9" /><defs><linearGradient id="rcg" gradientUnits="userSpaceOnUse" x1="700" y1="0" x2="950" y2="0"><stop offset="0" stop-color="#8a8aa8"/><stop offset="1" stop-color="#b0b0d4"/></linearGradient></defs><path d="M661.7,471.3 C664.8,473.1 663.6,473.7 680.0,482.0 C696.4,490.3 729.2,507.3 760.0,521.0 C790.8,534.7 836.5,553.0 865.0,564.0 C893.5,575.0 908.5,579.7 931.0,587.0 C953.5,594.3 988.5,604.5 1000.0,608.0 L950.0,614.0 C945.3,612.3 937.7,609.2 922.0,604.0 C906.3,598.8 883.0,592.7 856.0,583.0 C829.0,573.3 786.0,556.6 760.0,545.6 C734.0,534.6 717.9,526.1 700.0,517.0 C682.1,507.9 660.4,495.3 652.5,491.0 Z" fill="url(#rcg)" /><path d="M745.0,532.0 C754.2,535.3 780.8,545.2 800.0,552.0 C819.2,558.8 838.3,565.7 860.0,573.0 C881.7,580.3 906.7,588.8 930.0,596.0 C953.3,603.2 988.3,612.7 1000.0,616.0" fill="none" stroke="#c8c8ea" stroke-width="3.5" stroke-opacity=".75"/><path d="M574.0,323.0 C586.3,329.5 625.3,349.2 648.0,362.0 C670.7,374.8 686.8,387.5 710.0,400.0 C733.2,412.5 764.0,427.8 787.0,437.0 C810.0,446.2 825.8,449.7 848.0,455.0 C870.2,460.3 894.7,464.0 920.0,469.0 C945.3,474.0 979.0,480.7 1000.0,485.0 C1021.0,489.3 1038.3,493.3 1046.0,495.0 L1040.0,502.0 C1033.3,500.7 1020.0,497.8 1000.0,494.0 C980.0,490.2 946.7,484.0 920.0,479.0 C893.3,474.0 863.7,469.8 840.0,464.0 C816.3,458.2 802.3,454.7 778.0,444.0 C753.7,433.3 717.0,412.3 694.0,400.0 C671.0,387.7 660.7,381.5 640.0,370.0 C619.3,358.5 581.7,337.5 570.0,331.0 Z" fill="#9696b8" /><path d="M570.0,331.0 C581.7,337.5 619.3,358.5 640.0,370.0 C660.7,381.5 671.0,387.7 694.0,400.0 C717.0,412.3 753.7,433.3 778.0,444.0 C802.3,454.7 816.3,458.2 840.0,464.0 C863.7,469.8 893.3,474.0 920.0,479.0 C946.7,484.0 986.7,491.5 1000.0,494.0 L1000.0,503.0 C986.7,500.6 945.3,494.2 920.0,488.5 C894.7,482.8 872.7,476.1 848.0,469.0 C823.3,461.9 800.0,457.2 772.0,446.0 C744.0,434.8 702.0,412.5 680.0,401.5 C658.0,390.5 658.8,390.1 640.0,380.0 C621.2,369.9 579.2,347.5 567.0,341.0 Z" fill="#9a9abc" /><path d="M600.0,340.0 C615.0,348.2 660.0,372.3 690.0,389.0 C720.0,405.7 753.7,428.0 780.0,440.0 C806.3,452.0 824.7,455.0 848.0,461.0 C871.3,467.0 894.7,471.2 920.0,476.0 C945.3,480.8 986.7,487.7 1000.0,490.0" fill="none" stroke="#b4b4d6" stroke-width="2" stroke-opacity=".8"/><polygon points="920.0,583.0 1000.0,608.0 1100.0,642.0 1172.0,666.0 1175.0,683.0 1100.0,659.0 1000.0,627.0 926.0,600.5" fill="#bcbcde" /><path d="M925.0,588.0 C937.5,592.2 970.8,603.2 1000.0,613.0 C1029.2,622.8 1071.3,637.3 1100.0,647.0 C1128.7,656.7 1160.0,667.0 1172.0,671.0" fill="none" stroke="#e4e4fa" stroke-width="3" stroke-opacity=".8"/><polygon points="926.0,600.5 1000.0,627.0 1100.0,659.0 1175.0,683.0 1175.0,721.0 1091.0,695.0 1088.0,700.0 1086.0,716.6 1042.0,701.0 1042.0,690.0 1000.0,676.0 960.0,660.0 940.0,640.0" fill="#c8c8ea" /><polygon points="1054.4,690.6 1063.5,686.0 1072.7,673.8 1071.0,661.6 1064.0,652.0 1100.0,659.0 1175.0,683.0 1175.0,721.0 1091.0,695.0 1088.0,700.0 1086.0,716.6 1042.0,701.0 1042.0,690.6" fill="#dedef8" /><path d="M614.0,629.0 C629.5,634.8 681.0,654.3 707.0,664.0 C733.0,673.7 749.0,675.8 770.0,687.0 C791.0,698.2 815.5,718.0 833.0,731.0 C850.5,744.0 863.8,756.5 875.0,765.0 C886.2,773.5 890.8,774.7 900.0,782.0 C909.2,789.3 925.0,804.5 930.0,809.0 L882.0,818.0 C880.0,815.0 878.2,807.5 870.0,800.0 C861.8,792.5 849.7,784.5 833.0,773.0 C816.3,761.5 791.0,743.5 770.0,731.0 C749.0,718.5 727.3,709.2 707.0,698.0 C686.7,686.8 666.3,674.3 648.0,664.0 C629.7,653.7 605.5,640.7 597.0,636.0 Z" fill="#8a8aaa" /><polygon points="355.6,503.1 400.0,521.5 441.0,543.4 487.0,568.0 550.0,602.0 600.0,630.0 644.0,657.0 690.0,686.0 728.0,710.0 770.0,738.0 812.0,769.0 850.0,795.0 880.0,818.0 882.0,823.6 850.4,809.0 829.5,790.0 802.2,771.2 766.5,754.4 735.0,731.3 693.0,708.2 657.3,689.3 630.0,674.6 592.0,648.0 550.0,627.0 512.2,606.0 474.4,585.0 440.8,564.0 399.4,539.2 369.4,522.9 346.2,510.8 342.7,505.7" fill="#9898b8" /><path d="M355.6,503.1 C363.0,506.2 385.8,514.8 400.0,521.5 C414.2,528.2 426.5,535.6 441.0,543.4 C455.5,551.1 468.8,558.2 487.0,568.0 C505.2,577.8 531.2,591.7 550.0,602.0 C568.8,612.3 584.3,620.8 600.0,630.0 C615.7,639.2 629.0,647.7 644.0,657.0 C659.0,666.3 676.0,677.2 690.0,686.0 C704.0,694.8 714.7,701.3 728.0,710.0 C741.3,718.7 756.0,728.2 770.0,738.0 C784.0,747.8 798.7,759.5 812.0,769.0 C825.3,778.5 838.7,786.8 850.0,795.0 C861.3,803.2 875.0,813.0 880.0,818.0 C885.0,823.0 885.0,827.7 880.0,825.0 C875.0,822.3 861.3,810.2 850.0,802.0 C838.7,793.8 825.3,785.5 812.0,776.0 C798.7,766.5 784.0,754.8 770.0,745.0 C756.0,735.2 741.3,725.7 728.0,717.0 C714.7,708.3 704.0,701.8 690.0,693.0 C676.0,684.2 659.0,673.3 644.0,664.0 C629.0,654.7 615.7,646.2 600.0,637.0 C584.3,627.8 568.8,619.3 550.0,609.0 C531.2,598.7 505.2,584.8 487.0,575.0 C468.8,565.2 455.5,558.1 441.0,550.4 C426.5,542.6 414.2,535.2 400.0,528.5 C385.8,521.8 363.0,513.2 355.6,510.1 Z" fill="#7c7c98" /><path d="M369.0,522.7 L376.0,518.6" stroke="#000" stroke-width=".8"/><path d="M373.5,525.1 L380.5,520.4" stroke="#000" stroke-width=".8"/><path d="M378.0,527.6 L385.0,522.3" stroke="#000" stroke-width=".8"/><path d="M371.0,522.8 L378.0,520.4" stroke="#c8c8e8" stroke-width="2.5" stroke-opacity=".7"/><path d="M405.0,542.6 L412.0,534.9" stroke="#000" stroke-width=".8"/><path d="M409.5,545.3 L416.5,537.3" stroke="#000" stroke-width=".8"/><path d="M414.0,547.9 L421.0,539.7" stroke="#000" stroke-width=".8"/><path d="M407.0,542.8 L414.0,537.0" stroke="#c8c8e8" stroke-width="2.5" stroke-opacity=".7"/><path d="M441.0,564.1 L448.0,554.1" stroke="#000" stroke-width=".8"/><path d="M445.5,566.9 L452.5,556.5" stroke="#000" stroke-width=".8"/><path d="M450.0,569.8 L457.0,559.0" stroke="#000" stroke-width=".8"/><path d="M443.0,564.4 L450.0,556.2" stroke="#c8c8e8" stroke-width="2.5" stroke-opacity=".7"/><path d="M475.0,585.3 L482.0,572.3" stroke="#000" stroke-width=".8"/><path d="M479.5,587.8 L486.5,574.7" stroke="#000" stroke-width=".8"/><path d="M484.0,590.3 L491.0,577.2" stroke="#000" stroke-width=".8"/><path d="M477.0,585.4 L484.0,574.4" stroke="#c8c8e8" stroke-width="2.5" stroke-opacity=".7"/><path d="M513.0,606.4 L520.0,592.8" stroke="#000" stroke-width=".8"/><path d="M517.5,608.9 L524.5,595.2" stroke="#000" stroke-width=".8"/><path d="M522.0,611.4 L529.0,597.7" stroke="#000" stroke-width=".8"/><path d="M515.0,606.6 L522.0,594.9" stroke="#c8c8e8" stroke-width="2.5" stroke-opacity=".7"/><path d="M548.0,625.9 L555.0,611.8" stroke="#000" stroke-width=".8"/><path d="M552.5,628.2 L559.5,614.3" stroke="#000" stroke-width=".8"/><path d="M557.0,630.5 L564.0,616.8" stroke="#000" stroke-width=".8"/><path d="M550.0,626.0 L557.0,613.9" stroke="#c8c8e8" stroke-width="2.5" stroke-opacity=".7"/><path d="M586.0,645.0 L593.0,633.1" stroke="#000" stroke-width=".8"/><path d="M590.5,647.2 L597.5,635.6" stroke="#000" stroke-width=".8"/><path d="M595.0,650.1 L602.0,638.2" stroke="#000" stroke-width=".8"/><path d="M588.0,645.0 L595.0,635.2" stroke="#c8c8e8" stroke-width="2.5" stroke-opacity=".7"/><path d="M621.0,668.3 L628.0,654.2" stroke="#000" stroke-width=".8"/><path d="M625.5,671.5 L632.5,656.9" stroke="#000" stroke-width=".8"/><path d="M630.0,674.6 L637.0,659.7" stroke="#000" stroke-width=".8"/><path d="M623.0,668.7 L630.0,656.4" stroke="#c8c8e8" stroke-width="2.5" stroke-opacity=".7"/><path d="M657.0,689.1 L664.0,676.6" stroke="#000" stroke-width=".8"/><path d="M661.5,691.5 L668.5,679.4" stroke="#000" stroke-width=".8"/><path d="M666.0,693.9 L673.0,682.3" stroke="#000" stroke-width=".8"/><path d="M659.0,689.2 L666.0,678.9" stroke="#c8c8e8" stroke-width="2.5" stroke-opacity=".7"/><path d="M691.0,707.1 L698.0,698.1" stroke="#000" stroke-width=".8"/><path d="M695.5,709.6 L702.5,700.9" stroke="#000" stroke-width=".8"/><path d="M700.0,712.1 L707.0,703.7" stroke="#000" stroke-width=".8"/><path d="M693.0,707.2 L700.0,700.3" stroke="#c8c8e8" stroke-width="2.5" stroke-opacity=".7"/><path d="M727.0,726.9 L734.0,721.0" stroke="#000" stroke-width=".8"/><path d="M731.5,729.4 L738.5,724.0" stroke="#000" stroke-width=".8"/><path d="M736.0,732.0 L743.0,727.0" stroke="#000" stroke-width=".8"/><path d="M729.0,727.0 L736.0,723.3" stroke="#c8c8e8" stroke-width="2.5" stroke-opacity=".7"/><path d="M764.0,752.6 L771.0,745.7" stroke="#000" stroke-width=".8"/><path d="M768.5,755.3 L775.5,749.1" stroke="#000" stroke-width=".8"/><path d="M773.0,757.5 L780.0,752.4" stroke="#000" stroke-width=".8"/><path d="M766.0,753.0 L773.0,748.2" stroke="#c8c8e8" stroke-width="2.5" stroke-opacity=".7"/><path d="M797.0,768.8 L804.0,770.1" stroke="#000" stroke-width=".8"/><path d="M801.5,770.9 L808.5,773.4" stroke="#000" stroke-width=".8"/><path d="M806.0,773.8 L813.0,776.7" stroke="#000" stroke-width=".8"/><path d="M799.0,768.7 L806.0,772.6" stroke="#c8c8e8" stroke-width="2.5" stroke-opacity=".7"/><path d="M832.0,792.3 L839.0,794.5" stroke="#000" stroke-width=".8"/><path d="M836.5,796.4 L843.5,797.6" stroke="#000" stroke-width=".8"/><path d="M841.0,800.5 L848.0,800.6" stroke="#000" stroke-width=".8"/><path d="M834.0,793.1 L841.0,796.8" stroke="#c8c8e8" stroke-width="2.5" stroke-opacity=".7"/><defs><linearGradient id="bfg" gradientUnits="userSpaceOnUse" x1="0" y1="803" x2="0" y2="828"><stop offset="0" stop-color="#b4b4d6"/><stop offset=".5" stop-color="#9a9abc"/><stop offset="1" stop-color="#55556e"/></linearGradient></defs><polygon points="920.0,813.0 1000.0,806.0 1062.0,802.0 1090.5,802.4 1106.2,806.6 1141.9,807.6 1188.6,815.5 1192.0,825.0 1150.0,819.0 1097.0,815.5 1008.0,820.0 946.0,826.0 920.0,830.0" fill="url(#bfg)" /><polygon points="1188.6,815.0 1250.0,819.2 1191.2,825.5" fill="#8e8eae" /><path d="M1151.4,730 L1090.5,802.4 L1106.2,806.6 L1164,731 Z" fill="#9c9cbe" opacity=".8"/></g><ellipse cx="492.5" cy="482" rx="18" ry="17" fill="#8d8daa" stroke="#000" stroke-width=".9"/><ellipse cx="493" cy="482" rx="13.5" ry="12.5" fill="#a0a0c0" stroke="#000" stroke-width=".9"/><ellipse cx="493.5" cy="482.5" rx="10.5" ry="9.5" fill="#8a8aa8" stroke="#000" stroke-width=".9"/><rect x="551" y="398" width="19" height="7" rx="3.5" transform="rotate(25 560.5 401.5)" fill="#1c2a4a" stroke="#000" stroke-width=".8"/><rect x="1045" y="567.5" width="21" height="5" rx="2.5" transform="rotate(8 1055.5 570)" fill="#24345a" stroke="#000" stroke-width=".8"/><ellipse cx="603.4" cy="589" rx="48" ry="44.6" transform="rotate(12 603.4 589)" fill="#9e9ec0" stroke="#000" stroke-width=".9"/><defs><radialGradient id="pock" cx="0.4" cy="0.35" r="0.7"><stop offset="0" stop-color="#5e5e76"/><stop offset=".6" stop-color="#7e7e9a"/><stop offset="1" stop-color="#a4a4c4"/></radialGradient><radialGradient id="hl1" cx="0.5" cy="0.5" r="0.5"><stop offset="0" stop-color="#f0f0ff"/><stop offset="1" stop-color="#f0f0ff" stop-opacity="0"/></radialGradient></defs><ellipse cx="595" cy="580" rx="34" ry="24" transform="rotate(22 595 580)" fill="url(#pock)" stroke="#000" stroke-width=".9"/><ellipse cx="623" cy="604" rx="16" ry="14" fill="url(#hl1)" opacity=".9"/><ellipse cx="619" cy="590.8" rx="17" ry="20" fill="none" stroke="#000" stroke-width=".8"/><circle cx="623" cy="592" r="13" fill="#b4b4d8" stroke="#000" stroke-width=".8"/><circle cx="623" cy="592" r="11" fill="none" stroke="#000" stroke-width=".7"/><ellipse cx="622.5" cy="592" rx="7.3" ry="8" fill="#24345a" stroke="#000" stroke-width=".8"/><path d="M602.0,578.5 L560.7,561.8" fill="none" stroke="#000" stroke-width="0.8" /><path d="M614.0,609.0 L614.0,629.0" fill="none" stroke="#000" stroke-width="0.8" /><path d="M635.5,603.0 L643.0,607.5" fill="none" stroke="#000" stroke-width="0.8" /><path d="M660 505 L690 504 Q699 510 697 524 L687 546 Q675 549 663 544 L654 534 Q652 516 660 505 Z" fill="#8e8eac" stroke="#000" stroke-width=".9"/><path d="M664 511 L686 510 Q693 515 690 528 L682 541 Q673 543 666 539 L659 531 Q657 519 664 511 Z" fill="#9090ae" stroke="#000" stroke-width=".8"/><ellipse cx="716" cy="541" rx="30" ry="33" fill="#a4a4c6" stroke="#000" stroke-width=".9"/><ellipse cx="738" cy="530" rx="7" ry="14" fill="url(#hl1)" opacity=".8"/><circle cx="710.6" cy="541.9" r="18.5" fill="none" stroke="#000" stroke-width=".8"/><circle cx="710.6" cy="541.9" r="16.5" fill="#8e8eac" stroke="#000" stroke-width=".8"/><path d="M730.0,510.0 L722.0,530.0" fill="none" stroke="#000" stroke-width="0.8" /><path d="M734.0,512.0 L726.0,531.0" fill="none" stroke="#000" stroke-width="0.8" /><ellipse cx="1103.5" cy="719.5" rx="7" ry="8" fill="#2c3e66" stroke="#000" stroke-width=".9"/><path d="M681.0,574.5 C684.2,574.2 692.0,572.9 700.0,573.0 C708.0,573.1 699.0,565.7 729.0,575.0 C759.0,584.3 844.8,616.2 880.0,628.7 C915.2,641.2 926.2,644.3 940.0,650.0 C953.8,655.7 958.2,659.0 963.0,663.0 C967.8,667.0 969.8,670.7 969.0,674.0 C968.2,677.3 972.8,685.2 958.0,683.0 C943.2,680.8 919.3,674.2 880.0,660.7 C840.7,647.2 752.8,613.8 722.0,602.0 C691.2,590.2 701.7,593.5 695.0,590.0 C688.3,586.5 684.2,582.5 682.0,581.0 Z" fill="#a6a6c8" stroke="#000" stroke-width=".9"/><polygon points="705.0,574.0 729.0,575.0 880.0,628.7 955.0,655.0 960.0,664.0 880.0,640.0 700.0,577.0" fill="#8c8cac" /><polygon points="700.0,582.0 880.0,649.3 955.0,674.0 950.0,679.0 880.0,660.7 722.0,602.0" fill="#c4c4e4" /><path d="M683.4,576.0 C716.2,586.7 833.9,625.2 880.0,640.0 C926.1,654.8 946.7,660.8 960.0,665.0" fill="none" stroke="#000" stroke-width="0.8" /><path d="M685.7,581.8 C718.1,593.0 834.6,633.8 880.0,649.3 C925.4,664.8 945.0,670.7 958.0,675.0" fill="none" stroke="#000" stroke-width="0.8" /><path d="M729.0,575.0 L722.0,602.0" fill="none" stroke="#000" stroke-width="0.8" /><path d="M839.0,617.0 L834.0,643.0" fill="none" stroke="#000" stroke-width="0.8" /><path d="M944.4,617.3 C947.8,616.8 957.6,613.5 965.0,614.0 C972.4,614.5 979.5,617.4 988.7,620.4 C997.9,623.4 1008.5,627.7 1020.0,632.0 C1031.5,636.3 1048.9,641.4 1057.4,646.3 C1065.9,651.2 1068.5,657.0 1071.1,661.6 C1073.6,666.2 1074.0,669.7 1072.7,673.8 C1071.4,677.9 1066.5,683.2 1063.5,686.0 C1060.5,688.8 1058.0,689.9 1054.4,690.6 C1050.8,691.3 1051.1,692.4 1042.0,690.0 C1032.9,687.6 1011.4,679.7 1000.0,676.0 C988.6,672.3 982.4,671.6 973.4,667.7 C964.4,663.8 951.9,658.0 946.0,652.4 C940.1,646.8 939.6,637.1 938.3,634.0 Z" fill="#b8b8da" stroke="#000" stroke-width=".9"/><defs><linearGradient id="pk2" x1="0" y1="0" x2="0.2" y2="1"><stop offset="0" stop-color="#7a7a98"/><stop offset=".55" stop-color="#b0b0d2"/><stop offset="1" stop-color="#d8d8f4"/></linearGradient></defs><path d="M947.5,626.5 C950.4,625.9 958.1,621.8 965.0,623.0 C971.9,624.2 975.1,628.6 988.7,634.0 C1002.3,639.4 1033.7,649.6 1046.7,655.5 C1059.7,661.4 1064.0,665.1 1066.6,669.2 C1069.1,673.3 1066.4,678.5 1062.0,680.0 C1057.6,681.5 1052.0,681.3 1040.0,678.0 C1028.0,674.7 1004.2,665.2 990.0,660.0 C975.8,654.8 962.5,650.8 955.0,647.0 C947.5,643.2 946.7,638.7 945.0,637.0 Z" fill="url(#pk2)" stroke="#000" stroke-width=".8"/><path d="M988.7,620.4 C988.4,624.5 989.3,637.1 987.0,645.0 C984.7,652.9 977.0,664.2 975.0,668.0" fill="none" stroke="#000" stroke-width="0.8" /><path d="M1045.0,643.0 C1044.5,646.7 1044.8,657.2 1042.0,665.0 C1039.2,672.8 1030.3,685.8 1028.0,690.0" fill="none" stroke="#000" stroke-width="0.8" /><path d="M574.0,323.0 C586.3,329.5 625.3,349.2 648.0,362.0 C670.7,374.8 686.8,387.5 710.0,400.0 C733.2,412.5 764.0,427.8 787.0,437.0 C810.0,446.2 825.8,449.7 848.0,455.0 C870.2,460.3 894.7,464.0 920.0,469.0 C945.3,474.0 979.0,480.7 1000.0,485.0 C1021.0,489.3 1038.3,493.3 1046.0,495.0" fill="none" stroke="#000" stroke-width="1.0" /><path d="M570.0,331.0 C581.7,337.5 619.3,358.5 640.0,370.0 C660.7,381.5 671.0,387.7 694.0,400.0 C717.0,412.3 753.7,433.3 778.0,444.0 C802.3,454.7 816.3,458.2 840.0,464.0 C863.7,469.8 893.3,474.0 920.0,479.0 C946.7,484.0 980.0,490.2 1000.0,494.0 C1020.0,497.8 1033.3,500.7 1040.0,502.0" fill="none" stroke="#000" stroke-width="1.0" /><path d="M567.0,341.0 C579.2,347.5 621.2,369.9 640.0,380.0 C658.8,390.1 658.0,390.5 680.0,401.5 C702.0,412.5 744.0,434.8 772.0,446.0 C800.0,457.2 823.3,461.9 848.0,469.0 C872.7,476.1 894.7,482.8 920.0,488.5 C945.3,494.2 980.8,499.4 1000.0,503.0 C1019.2,506.6 1029.2,508.8 1035.0,510.0" fill="none" stroke="#000" stroke-width="1.0" /><path d="M548.7,367.5 C563.9,375.2 618.1,402.6 640.0,414.0 C661.9,425.4 660.7,426.2 680.0,436.0 C699.3,445.8 730.5,462.2 756.0,473.0 C781.5,483.8 805.7,493.3 833.0,501.0 C860.3,508.7 892.2,513.0 920.0,519.0 C947.8,525.0 978.7,531.8 1000.0,537.0 C1021.3,542.2 1040.0,547.8 1048.0,550.0" fill="none" stroke="#000" stroke-width="1.0" /><path d="M544.0,375.0 C560.0,383.2 617.3,412.2 640.0,424.0 C662.7,435.8 660.7,436.0 680.0,446.0 C699.3,456.0 730.5,473.0 756.0,484.0 C781.5,495.0 805.7,504.2 833.0,512.0 C860.3,519.8 892.2,525.3 920.0,531.0 C947.8,536.7 979.0,541.5 1000.0,546.0 C1021.0,550.5 1038.3,556.0 1046.0,558.0" fill="none" stroke="#000" stroke-width="1.0" /><path d="M1068.0,545.0 C1075.0,546.0 1095.8,549.0 1110.0,551.0 C1124.2,553.0 1145.8,556.0 1153.0,557.0" fill="none" stroke="#000" stroke-width="1.0" /><path d="M1066.0,555.0 C1073.3,556.0 1095.5,559.0 1110.0,561.0 C1124.5,563.0 1145.8,566.0 1153.0,567.0" fill="none" stroke="#000" stroke-width="1.0" /><path d="M496.8,376.6 C509.3,383.5 544.1,402.1 571.6,417.9 C599.1,433.7 643.6,460.6 661.7,471.3 C679.8,482.0 663.6,473.7 680.0,482.0 C696.4,490.3 729.2,507.3 760.0,521.0 C790.8,534.7 836.5,553.0 865.0,564.0 C893.5,575.0 908.5,579.7 931.0,587.0 C953.5,594.3 971.8,598.8 1000.0,608.0 C1028.2,617.2 1071.3,632.3 1100.0,642.0 C1128.7,651.7 1160.0,662.0 1172.0,666.0" fill="none" stroke="#000" stroke-width="1.0" /><path d="M486.0,396.5 C502.8,406.2 559.1,438.8 586.9,454.5 C614.6,470.2 641.6,484.9 652.5,491.0" fill="none" stroke="#000" stroke-width="1.0" /><path d="M745.0,538.0 C747.5,539.3 741.5,538.1 760.0,545.6 C778.5,553.1 829.0,573.3 856.0,583.0 C883.0,592.7 906.3,598.8 922.0,604.0 C937.7,609.2 945.3,612.3 950.0,614.0" fill="none" stroke="#000" stroke-width="1.0" /><path d="M614.0,629.0 C629.5,634.8 681.0,654.3 707.0,664.0 C733.0,673.7 749.0,675.8 770.0,687.0 C791.0,698.2 815.5,718.0 833.0,731.0 C850.5,744.0 863.8,756.5 875.0,765.0 C886.2,773.5 890.8,774.7 900.0,782.0 C909.2,789.3 925.0,804.5 930.0,809.0" fill="none" stroke="#000" stroke-width="1.0" /><path d="M597.0,636.0 C605.5,640.7 629.7,653.7 648.0,664.0 C666.3,674.3 686.7,686.8 707.0,698.0 C727.3,709.2 749.0,718.5 770.0,731.0 C791.0,743.5 816.3,761.5 833.0,773.0 C849.7,784.5 861.8,792.5 870.0,800.0 C878.2,807.5 880.0,815.0 882.0,818.0" fill="none" stroke="#000" stroke-width="1.0" /><path d="M355.6,503.1 C363.0,506.2 385.8,514.8 400.0,521.5 C414.2,528.2 426.5,535.6 441.0,543.4 C455.5,551.1 468.8,558.2 487.0,568.0 C505.2,577.8 531.2,591.7 550.0,602.0 C568.8,612.3 584.3,620.8 600.0,630.0 C615.7,639.2 629.0,647.7 644.0,657.0 C659.0,666.3 676.0,677.2 690.0,686.0 C704.0,694.8 714.7,701.3 728.0,710.0 C741.3,718.7 756.0,728.2 770.0,738.0 C784.0,747.8 798.7,759.5 812.0,769.0 C825.3,778.5 838.7,786.8 850.0,795.0 C861.3,803.2 875.0,814.2 880.0,818.0" fill="none" stroke="#000" stroke-width="1.0" /><path d="M355.6,510.1 C363.0,513.2 385.8,521.8 400.0,528.5 C414.2,535.2 426.5,542.6 441.0,550.4 C455.5,558.1 468.8,565.2 487.0,575.0 C505.2,584.8 531.2,598.7 550.0,609.0 C568.8,619.3 584.3,627.8 600.0,637.0 C615.7,646.2 629.0,654.7 644.0,664.0 C659.0,673.3 676.0,684.2 690.0,693.0 C704.0,701.8 714.7,708.3 728.0,717.0 C741.3,725.7 756.0,735.2 770.0,745.0 C784.0,754.8 798.7,766.5 812.0,776.0 C825.3,785.5 838.7,793.8 850.0,802.0 C861.3,810.2 875.0,821.2 880.0,825.0" fill="none" stroke="#000" stroke-width="1.0" /><path d="M531.0,305.0 L558.0,321.0" fill="none" stroke="#000" stroke-width="1.0" /><path d="M530.0,309.5 L557.0,325.0" fill="none" stroke="#000" stroke-width="1.0" /><path d="M528.0,314.5 L556.0,329.0" fill="none" stroke="#000" stroke-width="1.0" /><path d="M1040,500 Q1056,505 1056,520 L1053,551 L1068,553 L1068,515 Q1064,496 1046,493 Z" fill="#a2a2c4"/><path d="M1060,512 L1058,550" stroke="#60607a" stroke-width="3" stroke-opacity=".6"/><path d="M1000.0,485.0 C1005.0,485.8 1022.3,488.7 1030.0,490.0 C1037.7,491.3 1043.3,492.5 1046.0,493.0" fill="none" stroke="#000" stroke-width="1.0" /><path d="M1046,493 Q1066,497 1068,515 L1068,553.5" fill="none" stroke="#000" stroke-width=".9"/><path d="M1040,500 Q1056,505 1056,520 L1053,551" fill="none" stroke="#000" stroke-width=".9"/><path d="M1062,516 L1064,552" fill="none" stroke="#000" stroke-width=".7"/><path d="M1048.0,551.0 L1068.0,553.5" fill="none" stroke="#000" stroke-width="1.0" /><path d="M558.7,320.8 C559.4,320.5 560.4,318.6 563.0,319.0 C565.6,319.4 572.6,322.3 574.5,323.0" fill="none" stroke="#000" stroke-width="1.0" /><path d="M560.0,328.7 L537.2,367.3" fill="none" stroke="#000" stroke-width="1.0" /><path d="M564.4,337.3 L544.4,371.6" fill="none" stroke="#000" stroke-width="1.0" /><path d="M567.3,341.6 L548.7,373.0" fill="none" stroke="#000" stroke-width="1.0" /><path d="M566.0,323.0 C566.7,324.3 569.8,327.9 570.0,331.0 C570.2,334.1 567.8,339.8 567.3,341.6" fill="none" stroke="#000" stroke-width="1.0" /><path d="M507.2,340.8 C510.5,342.6 522.2,349.3 527.2,351.6 C532.2,353.9 535.5,353.9 537.2,354.4" fill="none" stroke="#000" stroke-width="1.0" /><path d="M504.3,350.2 C508.6,352.6 524.5,361.6 530.0,364.5 C535.5,367.4 534.9,365.6 537.2,367.3 C539.5,369.1 542.9,373.7 544.0,375.0" fill="none" stroke="#000" stroke-width="1.0" /><path d="M527.2,351.6 L525.0,359.0" fill="none" stroke="#000" stroke-width="0.8" /><polygon points="354.8,482.5 364.2,487.6 358.2,499.7 354.8,504.8" fill="#70708c" /><path d="M354.8,482.5 L354.8,504.8" fill="none" stroke="#000" stroke-width="1.0" /><path d="M358.2,499.7 C361.8,494.7 371.5,471.9 379.7,469.6 C387.9,467.3 402.6,483.3 407.2,486.0" fill="none" stroke="#000" stroke-width="1.0" /><path d="M379.7,465.3 L379.7,469.6" fill="none" stroke="#000" stroke-width="0.8" /><path d="M407.2,486 Q395,500 386.5,516.9 L400.3,518.6 Q406,500 414,488.5 Z" fill="#7a7a96"/><path d="M407.2,486.0 C405.3,488.3 399.4,494.9 396.0,500.0 C392.6,505.1 388.1,514.1 386.5,516.9" fill="none" stroke="#000" stroke-width="1.0" /><path d="M414.0,488.5 C412.7,490.8 408.3,497.0 406.0,502.0 C403.7,507.0 401.2,515.8 400.3,518.6" fill="none" stroke="#000" stroke-width="1.0" /><path d="M420.0,491.1 C419.2,493.9 416.4,502.3 415.0,508.0 C413.6,513.7 412.1,522.5 411.5,525.4" fill="none" stroke="#000" stroke-width="1.0" /><path d="M358.2,499.7 L386.5,515.1" fill="none" stroke="#000" stroke-width="0.8" /><path d="M566,420 L474,570 L480,570 L573,421 Z" fill="#a0a0c2"/><path d="M563.0,419.0 L470.0,572.0" fill="none" stroke="#000" stroke-width="1.0" /><path d="M568.0,420.0 L474.0,571.0" fill="none" stroke="#000" stroke-width="1.0" /><path d="M575.0,421.0 L481.0,569.0" fill="none" stroke="#000" stroke-width="1.0" /><path d="M903.0,536.0 C896.7,540.7 872.8,556.2 865.0,564.0 C857.2,571.8 857.5,579.8 856.0,583.0" fill="none" stroke="#000" stroke-width="1.0" /><path d="M689.0,447.0 L652.5,491.0" fill="none" stroke="#000" stroke-width="1.0" /><path d="M751.8,400.0 L710.5,468.7" fill="none" stroke="#000" stroke-width="1.0" /><path d="M1008.0,500.0 L1010.0,548.0" fill="none" stroke="#000" stroke-width="1.0" /><path d="M951.9,680.0 C946.6,689.2 931.0,717.0 920.0,735.0 C909.0,753.0 891.7,779.2 886.0,788.0" fill="none" stroke="#000" stroke-width="1.0" /><path d="M1123.0,502.0 L1096.0,550.0" fill="none" stroke="#000" stroke-width="1.0" /><path d="M1131.0,510.0 L1102.0,559.0" fill="none" stroke="#000" stroke-width="1.0" /><path d="M1157.0,724.0 L1091.0,802.0" fill="none" stroke="#000" stroke-width="1.0" /><path d="M1164.0,726.0 L1106.0,807.0" fill="none" stroke="#000" stroke-width="1.0" /><path d="M1170.0,722.0 L1141.0,807.0" fill="none" stroke="#000" stroke-width="1.0" /><path d="M920.0,813.0 C933.3,811.8 976.3,807.8 1000.0,806.0 C1023.7,804.2 1046.9,802.6 1062.0,802.0 C1077.1,801.4 1083.1,801.6 1090.5,802.4 C1097.9,803.2 1097.6,805.7 1106.2,806.6 C1114.8,807.5 1128.2,806.1 1141.9,807.6 C1155.6,809.1 1180.8,814.2 1188.6,815.5" fill="none" stroke="#000" stroke-width="1.0" /><path d="M786.9,421.4 L777.7,444.3 L786.9,445.8 L799,423 Z" fill="#9c9cbe"/><path d="M792.95,422.2 L782.3,445.05" stroke="#5a5a74" stroke-width="2" stroke-opacity=".7"/><path d="M786.9,421.4 L777.7,444.3" fill="none" stroke="#000" stroke-width="0.8" /><path d="M799.0,423.0 L786.9,445.8" fill="none" stroke="#000" stroke-width="0.8" /><path d="M851,439.7 L837.3,464 L848,467 L858.6,441.2 Z" fill="#9c9cbe"/><path d="M854.8,440.45 L842.65,465.5" stroke="#5a5a74" stroke-width="2" stroke-opacity=".7"/><path d="M851.0,439.7 L837.3,464.0" fill="none" stroke="#000" stroke-width="0.8" /><path d="M858.6,441.2 L848.0,467.0" fill="none" stroke="#000" stroke-width="0.8" /><path d="M889,447.3 L886,476.3 L896.8,476.3 L898.3,447.3 Z" fill="#9c9cbe"/><path d="M893.65,447.3 L891.4,476.3" stroke="#5a5a74" stroke-width="2" stroke-opacity=".7"/><path d="M889.0,447.3 L886.0,476.3" fill="none" stroke="#000" stroke-width="0.8" /><path d="M898.3,447.3 L896.8,476.3" fill="none" stroke="#000" stroke-width="0.8" /><path d="M1018.6,443.3 L997.5,479.6 L1005,479.6 L1032,443.3 Z" fill="#9c9cbe"/><path d="M1025.3,443.3 L1001.25,479.6" stroke="#5a5a74" stroke-width="2" stroke-opacity=".7"/><path d="M1018.6,443.3 L997.5,479.6" fill="none" stroke="#000" stroke-width="0.8" /><path d="M1032.0,443.3 L1005.0,479.6" fill="none" stroke="#000" stroke-width="0.8" /><path d="M994.5,444.8 L1000.5,473.5" fill="none" stroke="#000" stroke-width="0.8" /><path d="M1090.5,802.4 L1096.8,815.0" fill="none" stroke="#000" stroke-width="0.8" /><path d="M1106.2,806.6 L1108.0,817.0" fill="none" stroke="#000" stroke-width="0.8" /><path d="M1119.0,807.0 L1122.0,817.5" fill="none" stroke="#000" stroke-width="0.8" /><path d="M1141.9,807.6 L1145.0,819.0" fill="none" stroke="#000" stroke-width="0.8" /><path d="M1188.6,815.0 L1191.2,825.5" fill="none" stroke="#000" stroke-width="0.8" /><path d="M1188.6,815.5 L1250.0,819.2" fill="none" stroke="#000" stroke-width="0.7" /><path d="M973,668 L1042,690.6 L1042,701.3 L1086.4,716.6 L1088,699.8 L1091,695.2 L1175,721.1" fill="none" stroke="#000" stroke-width=".9"/><path d="M926.1,600.5 C938.4,604.9 971.0,617.2 1000.0,627.0 C1029.0,636.8 1070.8,649.7 1100.0,659.0 C1129.2,668.3 1162.5,679.0 1175.0,683.0" fill="none" stroke="#000" stroke-width="1.0" /><path d="M932.2,586.8 L923.0,605.0" fill="none" stroke="#000" stroke-width="1.0" /><path d="M1059.0,628.0 L1045.2,658.5" fill="none" stroke="#000" stroke-width="1.0" /><path d="M673.0,480.0 C669.5,486.3 659.0,505.2 652.0,518.0 C645.0,530.8 634.5,550.5 631.0,557.0" fill="none" stroke="#000" stroke-width="1.0" /><polygon points="540.0,290.3 546.9,286.9 555.5,287.7 591.5,308.5 643.0,338.3 694.6,368.2 750.8,400.8 765.0,407.0 770.1,414.0 777.0,415.7 786.0,417.7 825.3,429.7 870.6,443.3 923.5,448.6 961.2,448.6 1006.5,444.8 1045.8,439.6 1056.4,439.6 1064.0,444.0 1088.0,468.0 1114.8,494.8 1136.2,513.5 1154.9,524.1 1157.5,532.1 1152.2,569.5 1141.5,623.0 1146.9,628.3 1160.2,636.3 1170.9,660.3 1174.9,673.7 1175.0,722.5 1174.1,736.7 1173.4,745.7 1180.7,754.1 1190.0,756.5 1201.7,757.3 1208.0,761.0 1212.2,766.7 1213.3,777.2 1209.0,784.6 1200.0,791.5 1191.2,798.2 1189.1,801.4 1188.6,815.0 1250.0,819.2 1191.2,825.5 1150.2,819.0 1097.0,815.5 1075.8,816.4 1008.5,820.0 946.6,826.0 920.0,830.5 886.0,830.0 882.0,823.6 850.4,809.0 829.5,790.0 802.2,771.2 766.5,754.4 735.0,731.3 693.0,708.2 657.3,689.3 630.0,674.6 592.0,648.0 550.0,627.0 512.2,606.0 474.4,585.0 440.8,564.0 399.4,539.2 369.4,522.9 346.2,510.8 342.7,505.7 342.7,499.7 354.8,482.5 364.2,487.6 379.7,465.3 386.5,465.3 400.3,472.2 402.0,476.5 402.0,480.8 408.0,485.9 420.0,490.2 426.9,491.1 433.8,484.2 434.7,476.5 449.3,455.0 469.0,421.0 488.8,391.6 498.7,369.0 503.7,349.4 513.6,329.6 533.5,302.0" fill="none" stroke="#000" stroke-width="1"/><defs><linearGradient id="wm" x1="0" y1="0" x2="0" y2="1"><stop offset="0" stop-color="#f06a18"/><stop offset="1" stop-color="#f8a020"/></linearGradient></defs><g fill="url(#wm)"><path d="M891,525 l3,-7 v21 h-3z"/><path d="M895.5,513 l3,-4 v29 h-3z"/><path d="M900,512 l3,-4 v30 h-3z"/><path d="M933,525 l3,-7 v21 h-3z" transform="translate(1827,0) scale(-1,1)"/><path d="M927,513 l-3,-4 v29 h3z"/><path d="M932,512 l-3,-4 v30 h3z"/><path d="M936,525 l-2.5,-7 v21 h2.5z"/><path d="M891,537 h45 v3 h-45z"/><path d="M914,510 q-8,2 -9,9 q4,-3 6,0 l-2,10 q3,6 8,2 q5,-6 3,-13 q-3,4 -6,2z" fill="#f8a818"/><ellipse cx="913.5" cy="538" rx="4" ry="1.5" fill="#f07020"/></g><text x="946.5" y="530" font-size="16.5" font-weight="bold" font-family="Liberation Sans" fill="#f5901e" textLength="82.5" lengthAdjust="spacingAndGlyphs">智造资料网</text><text x="947" y="538.3" font-size="5.5" font-weight="bold" font-family="Liberation Sans" fill="#f5901e" textLength="82" lengthAdjust="spacingAndGlyphs">INTELLIGENT MANUFACTURING DATA</text></svg><svg class="abs" style="left:0;top:0" width="400" height="300"><rect x="64" y="113" width="24" height="24" fill="#7c8194"/><rect x="92" y="113" width="24" height="24" fill="#7c8194"/><rect x="120" y="113" width="24" height="24" fill="#7c8194"/><rect x="148" y="113" width="24" height="24" fill="#7c8194"/><rect x="176" y="113" width="24" height="24" fill="#7c8194"/><rect x="204" y="113" width="24" height="24" fill="#7c8194"/><rect x="232" y="113" width="24" height="24" fill="#7c8194"/><rect x="260" y="113" width="24" height="24" fill="#7c8194"/><rect x="288" y="113" width="24" height="24" fill="#7c8194"/><rect x="316" y="113" width="24" height="24" fill="#7c8194"/><rect x="344" y="113" width="24" height="24" fill="#7c8194"/><path d="M68 119h16M68 125h16M68 131h16" stroke="#2a3a6a" stroke-width="3"/><rect x="97" y="119" width="14" height="12" fill="#e8f0fa" stroke="#889"/><path d="M95 117l3 3M113 117l-3 3M95 133l3-3M113 133l-3-3" stroke="#30c030" stroke-width="1.6"/><circle cx="133" cy="124" r="5" fill="#c0d0e8" stroke="#666" stroke-width="1.2"/><path d="M137 128l4 4" stroke="#555" stroke-width="2"/><path d="M158 127v-11" stroke="#2060e0" stroke-width="1.6"/><path d="M158 127l8-5" stroke="#30b030" stroke-width="1.6"/><path d="M158 127l7 6" stroke="#e02020" stroke-width="1.6"/><circle cx="158" cy="127" r="1.5" fill="#fff"/><polygon points="188.0,116.0 197.5,119.5 188.0,123.0 178.5,119.5" fill="#38c838"/><path d="M188.0,116.0 L197.5,119.5 L197.5,129.5 L188.0,134.0 L178.5,129.5 L178.5,119.5 Z M178.5,119.5 L188.0,123.0 L197.5,119.5 M188.0,123.0 L188.0,134.0 M188.0,116.0 L188.0,126.5 M178.5,129.5 L188.0,126.5 L197.5,129.5" fill="none" stroke="#000" stroke-width="1.1"/><polygon points="216.0,126.5 225.5,129.5 216.0,134.0 206.5,129.5" fill="#38c838"/><path d="M216.0,116.0 L225.5,119.5 L225.5,129.5 L216.0,134.0 L206.5,129.5 L206.5,119.5 Z M206.5,119.5 L216.0,123.0 L225.5,119.5 M216.0,123.0 L216.0,134.0 M216.0,116.0 L216.0,126.5 M206.5,129.5 L216.0,126.5 L225.5,129.5" fill="none" stroke="#000" stroke-width="1.1"/><polygon points="244.0,116.0 234.5,119.5 234.5,129.5 244.0,126.5" fill="#38c838"/><path d="M244.0,116.0 L253.5,119.5 L253.5,129.5 L244.0,134.0 L234.5,129.5 L234.5,119.5 Z M234.5,119.5 L244.0,123.0 L253.5,119.5 M244.0,123.0 L244.0,134.0 M244.0,116.0 L244.0,126.5 M234.5,129.5 L244.0,126.5 L253.5,129.5" fill="none" stroke="#000" stroke-width="1.1"/><polygon points="272.0,123.0 281.5,119.5 281.5,129.5 272.0,134.0" fill="#38c838"/><path d="M272.0,116.0 L281.5,119.5 L281.5,129.5 L272.0,134.0 L262.5,129.5 L262.5,119.5 Z M262.5,119.5 L272.0,123.0 L281.5,119.5 M272.0,123.0 L272.0,134.0 M272.0,116.0 L272.0,126.5 M262.5,129.5 L272.0,126.5 L281.5,129.5" fill="none" stroke="#000" stroke-width="1.1"/><polygon points="290.5,119.5 300.0,123.0 300.0,134.0 290.5,129.5" fill="#38c838"/><path d="M300.0,116.0 L309.5,119.5 L309.5,129.5 L300.0,134.0 L290.5,129.5 L290.5,119.5 Z M290.5,119.5 L300.0,123.0 L309.5,119.5 M300.0,123.0 L300.0,134.0 M300.0,116.0 L300.0,126.5 M290.5,129.5 L300.0,126.5 L309.5,129.5" fill="none" stroke="#000" stroke-width="1.1"/><polygon points="328.0,116.0 337.5,119.5 337.5,129.5 328.0,126.5" fill="#38c838"/><path d="M328.0,116.0 L337.5,119.5 L337.5,129.5 L328.0,134.0 L318.5,129.5 L318.5,119.5 Z M318.5,119.5 L328.0,123.0 L337.5,119.5 M328.0,123.0 L328.0,134.0 M328.0,116.0 L328.0,126.5 M318.5,129.5 L328.0,126.5 L337.5,129.5" fill="none" stroke="#000" stroke-width="1.1"/><polygon points="356.0,116.0 365.5,119.5 356.0,123.0 346.5,119.5" fill="#70e860"/><polygon points="346.5,119.5 356.0,123.0 356.0,134.0 346.5,129.5" fill="#30c030"/><polygon points="356.0,123.0 365.5,119.5 365.5,129.5 356.0,134.0" fill="#20a020"/><path d="M356.0,116.0 L365.5,119.5 L365.5,129.5 L356.0,134.0 L346.5,129.5 L346.5,119.5 Z M346.5,119.5 L356.0,123.0 L365.5,119.5 M356.0,123.0 L356.0,134.0" fill="none" stroke="#108010" stroke-width=".8"/><rect x="64" y="141" width="24" height="24" fill="#7c8194"/><rect x="64" y="169" width="24" height="24" fill="#7c8194"/><rect x="64.5" y="197.5" width="23" height="23" fill="#b8b08a" stroke="#e8c860"/><rect x="64" y="225" width="24" height="24" fill="#7c8194"/><rect x="64" y="253" width="24" height="24" fill="#7c8194"/><path d="M71 146v13a5 2 0 0 0 10 0v-13" fill="#9296a8" stroke="#222"/><ellipse cx="76" cy="146" rx="5" ry="2" fill="#9296a8" stroke="#222"/><path d="M71 174v13a5 2 0 0 0 10 0v-13" fill="#9296a8" stroke="#333"/><ellipse cx="76" cy="174" rx="5" ry="2" fill="#9296a8" stroke="#333"/><path d="M71 202v13a5 2 0 0 0 10 0v-13" fill="#5a88d0" stroke="#1a2a60"/><ellipse cx="76" cy="202" rx="5" ry="2" fill="#5a88d0" stroke="#1a2a60"/><path d="M71 230v13a5 2 0 0 0 10 0v-13" fill="#dde4f0" stroke="#555"/><ellipse cx="76" cy="230" rx="5" ry="2" fill="#dde4f0" stroke="#555"/><path d="M71 258v13a5 2 0 0 0 10 0v-13" fill="#9296a8" stroke="#222"/><ellipse cx="76" cy="258" rx="5" ry="2" fill="#9296a8" stroke="#222"/><path d="M74 259l2 11M78 259l-1 10" stroke="#222" stroke-width=".7"/></svg><svg class="abs" style="left:100px;top:860px" width="80" height="120" viewBox="100 860 80 120"><path d="M122.5 935l12.5-12.5l20 12l-11.25 16.75z" fill="rgba(150,160,190,.35)" stroke="#c8ccd8" stroke-width=".8"/><path d="M122 936l21 10l-1 6l-20-10z" fill="#9a9a70" stroke="#e8e020" stroke-width=".8"/><path d="M121 942l27 13" stroke="#c01818" stroke-width="2.5"/><path d="M143 950l8 8l-10 1z" fill="#900"/><path d="M120 928l5-6" stroke="#20b020" stroke-width="3"/><path d="M121 941l34-55" stroke="#30d8e8" stroke-width="2"/><path d="M158 882l-6 3l4 4z" fill="#30d8e8"/><circle cx="120" cy="941.5" r="3.2" fill="#777"/><text x="155" y="881" font-size="11" fill="#d8d8d8" font-family="Liberation Sans">Z</text><text x="151" y="967" font-size="11" fill="#e02020" font-family="Liberation Sans">X</text><text x="119" y="923" font-size="8" fill="#e02020" font-family="Liberation Sans">Y</text></svg><div id="status" class="abs"><div class="abs" style="left:2px;top:19px;width:1918px;height:1px;background:#a0a0a0"></div></div><div class="abs" style="left:1339px;top:1003px;width:133px;height:15px;background:#fff"></div><svg class="abs" style="left:1460px;top:1003px" width="14" height="14"><circle cx="8" cy="6" r="3.5" fill="none" stroke="#3a6ad0" stroke-width="1.3"/><path d="M5.5 8.5l-3 3" stroke="#3a6ad0" stroke-width="1.6"/></svg><div class="abs" style="left:1336px;top:1003px;width:2px;height:15px;background-image:linear-gradient(#fff 50%,transparent 50%);background-size:2px 3px"></div><div class="abs" style="left:1476px;top:1003px;width:2px;height:15px;background-image:linear-gradient(#fff 50%,transparent 50%);background-size:2px 3px"></div><div class="abs" style="left:1659px;top:1003px;width:2px;height:15px;background-image:linear-gradient(#fff 50%,transparent 50%);background-size:2px 3px"></div><div class="abs" style="left:1592px;top:1003px;width:1px;height:15px;background:#b8bcc8"></div><div class="abs" style="left:1727px;top:1003px;width:1px;height:15px;background:#b8bcc8"></div><div class="abs" style="left:1800px;top:1003px;width:1px;height:15px;background:#b8bcc8"></div><div class="abs" style="left:1843px;top:1003px;width:1px;height:15px;background:#b8bcc8"></div><div class="abs" style="left:1885px;top:1003px;width:1px;height:15px;background:#b8bcc8"></div><span class="abs" style="left:1486px;top:1006px;white-space:nowrap">绝对 XY 上视图</span><span class="abs" style="left:1601px;top:1006px;white-space:nowrap">绝对视图</span><span class="abs" style="left:1668px;top:1006px;white-space:nowrap;font-weight:bold">LAYER0</span><div class="abs" style="left:1762px;top:1005px;width:32px;height:12px;background:#4a628e"></div><div class="abs" style="left:1805px;top:1005px;width:32px;height:12px;background:#4a628e"></div><div class="abs" style="left:1848px;top:1005px;width:32px;height:12px;background:#4a628e"></div><svg class="abs" style="left:1893px;top:1003px" width="15" height="15"><circle cx="7.5" cy="7.5" r="6.5" fill="#2a70d0"/><path d="M3 5q3-3 5 0t4 3M4 11q3-2 5 1" fill="none" stroke="#30b030" stroke-width="2.4"/></svg><div class="abs" style="left:1133px;top:1023px;width:1px;height:15px;background:#b8bcc8"></div><div class="abs" style="left:1175px;top:1023px;width:1px;height:15px;background:#b8bcc8"></div><div class="abs" style="left:1206px;top:1023px;width:1px;height:15px;background:#b8bcc8"></div><div class="abs" style="left:1237px;top:1023px;width:1px;height:15px;background:#b8bcc8"></div><div class="abs" style="left:1268px;top:1023px;width:1px;height:15px;background:#b8bcc8"></div><div class="abs" style="left:1299px;top:1023px;width:1px;height:15px;background:#b8bcc8"></div><div class="abs" style="left:1330px;top:1023px;width:1px;height:15px;background:#b8bcc8"></div><div class="abs" style="left:1361px;top:1023px;width:1px;height:15px;background:#b8bcc8"></div><div class="abs" style="left:1424px;top:1023px;width:1px;height:15px;background:#b8bcc8"></div><div class="abs" style="left:1455px;top:1023px;width:1px;height:15px;background:#b8bcc8"></div><div class="abs" style="left:1580px;top:1023px;width:1px;height:15px;background:#b8bcc8"></div><div class="abs" style="left:1655px;top:1023px;width:1px;height:15px;background:#b8bcc8"></div><span class="abs" style="left:1141px;top:1025px;white-space:nowrap">拴牢</span><svg class="abs" style="left:1180px;top:1022px" width="260" height="18"><rect x="1" y="1" width="17" height="16" fill="#f0c8d0" stroke="#c04050"/><path d="M5 9a4 4 0 0 1 8-2M13 9a4 4 0 0 1-8 2" fill="none" stroke="#d03040" stroke-width="1.4"/><rect x="32" y="1" width="17" height="16" fill="#f8e080"/><path d="M36 4l9 10M38 14l6-8" stroke="#a060c0" stroke-width="2"/><path d="M65 8l7-4l7 4v7h-14z" fill="#c8d8f0" stroke="#4a6ab0" stroke-width=".8"/><path d="M68 8l10-5" stroke="#d09040" stroke-width="2"/><text x="97" y="15" font-size="16" font-weight="bold" fill="#3a6ad0" font-family="Liberation Sans">?</text><rect x="132" y="4" width="8" height="8" fill="#3a6ad0"/><rect x="136" y="7" width="8" height="8" fill="#8aa0c8" stroke="#333" stroke-width=".6"/><path d="M126 12l8-2" stroke="#e02020" stroke-width="1.6"/><rect x="156" y="1" width="17" height="16" fill="#f8e080"/><path d="M158 6l6-3l7 3v8l-7 3l-6-3z" fill="#8aaea0" stroke="#3a6ad0" stroke-width="1"/><path d="M158 6l6 3l7-3l-7-3z" fill="#e040f0"/><path d="M164 9v8" stroke="#3a6ad0"/><path d="M253 3h11v12h-11zM253 9h11M258.5 3v12" fill="none" stroke="#666" stroke-width="1.2"/></svg><span class="abs" style="left:1463px;top:1025px;white-space:nowrap">LS: 1.00 PS: 1.00</span><span class="abs" style="left:1588px;top:1025px;white-space:nowrap">单位: 毫米</span><span class="abs" style="left:1663px;top:1025px;white-space:nowrap;letter-spacing:.43px">X = 2313.270 Y = 1218.764 Z = 0000.000</span><div id="task" class="abs"><div class="abs" style="left:48px;top:0;width:344px;height:8px;background:#f0f0f0"></div><div class="abs" style="left:589px;top:0;width:48px;height:8px;background:#505050"></div><div class="abs" style="left:1915px;top:0;width:1px;height:8px;background:#9a9a9a"></div><span class="abs" style="left:1815px;top:4px;color:#fff;font-size:12px;line-height:13px">10:51</span></div><svg class="abs" style="left:1340px;top:960px" width="130" height="88" viewBox="1340 960 130 88"><ellipse cx="1403" cy="1037.7" rx="14.6" ry="2.4" fill="#b07040" opacity=".8"/><path d="M1404,975 q-2,-6 -4,-8" fill="none" stroke="#8a4a20" stroke-width="1.4"/><circle cx="1400.5" cy="967" r="2" fill="#8a4a20"/><path d="M1408,975 q0,-4 1,-7" fill="none" stroke="#8a4a20" stroke-width="1.2"/><ellipse cx="1409" cy="968" rx="1.3" ry="2" fill="#8a4a20"/><circle cx="1390" cy="977.5" r="5.2" fill="#c0803e" stroke="#8a4a20" stroke-width=".6"/><circle cx="1390.5" cy="978" r="2.2" fill="#f0b8a0"/><circle cx="1422.5" cy="977.5" r="5.2" fill="#c0803e" stroke="#8a4a20" stroke-width=".6"/><circle cx="1422" cy="978" r="2.2" fill="#f0b8a0"/><ellipse cx="1389" cy="1021" rx="5" ry="4" fill="#f8f060" stroke="#b07030" stroke-width=".6"/><ellipse cx="1424" cy="1022" rx="5" ry="4" fill="#f8f060" stroke="#b07030" stroke-width=".6"/><path d="M1392,1014 h28 l2,14 q-2,8 -8,10 h-14 q-7,-2 -8,-10z" fill="#f8f060" stroke="#b07030" stroke-width=".6"/><path d="M1394,1032 l18,-14" stroke="#8a5a30" stroke-width="1"/><ellipse cx="1406" cy="996" rx="26.8" ry="22.5" fill="#c0803e" stroke="#8a4a20" stroke-width=".7"/><ellipse cx="1406.7" cy="1000" rx="20.7" ry="17" fill="#fbf05a" stroke="#a06028" stroke-width=".6"/><circle cx="1395.7" cy="993.3" r="1.5" fill="#5a2a10"/><circle cx="1416.8" cy="993.3" r="1.5" fill="#5a2a10"/><ellipse cx="1406.2" cy="997.8" rx="1.3" ry=".6" fill="#5a2a10"/><circle cx="1390.4" cy="999.7" r="3" fill="#f8a030" opacity=".75"/><circle cx="1421.6" cy="999.7" r="3" fill="#f8a030" opacity=".75"/><circle cx="1396" cy="1029" r="7.5" fill="#c0803e" stroke="#8a4a20" stroke-width=".6"/><circle cx="1390.5" cy="1023" r="2.2" fill="#c0803e"/><circle cx="1401.5" cy="1023" r="2.2" fill="#c0803e"/><circle cx="1393" cy="1030" r="1.2" fill="#f070a0"/><circle cx="1399.5" cy="1030" r="1.2" fill="#f070a0"/><circle cx="1367.3" cy="1005.4" r="8.1" fill="#94604a"/><text x="1362.3" y="1010" font-size="12" fill="#fff" font-family="Liberation Sans">A</text><circle cx="1374.6" cy="1026.5" r="8.1" fill="#94604a"/><path d="M1369.5,1022.5 l3,-2 h4 l3,2 l-1.5,3 h-1.5 v5.5 h-5 v-5.5 h-1.5z" fill="#fff"/><text x="1433.5" y="991" font-size="21" font-weight="bold" fill="#fff" stroke="#d09060" stroke-width=".8" font-family="Liberation Sans" textLength="23" lengthAdjust="spacingAndGlyphs">W</text><circle cx="1440" cy="992" r="2.2" fill="#c0803e"/><circle cx="1452" cy="992" r="2.2" fill="#c0803e"/><ellipse cx="1446" cy="1002" rx="9.5" ry="10.5" fill="#c0803e" stroke="#8a4a20" stroke-width=".5"/><ellipse cx="1446" cy="1002.5" rx="3" ry="4.5" fill="#fff"/><text x="1434.5" y="1033" font-size="22" font-weight="bold" fill="#f8f060" stroke="#b07030" stroke-width=".8" font-family="Liberation Sans" textLength="23" lengthAdjust="spacingAndGlyphs">W</text></svg></body></html>
